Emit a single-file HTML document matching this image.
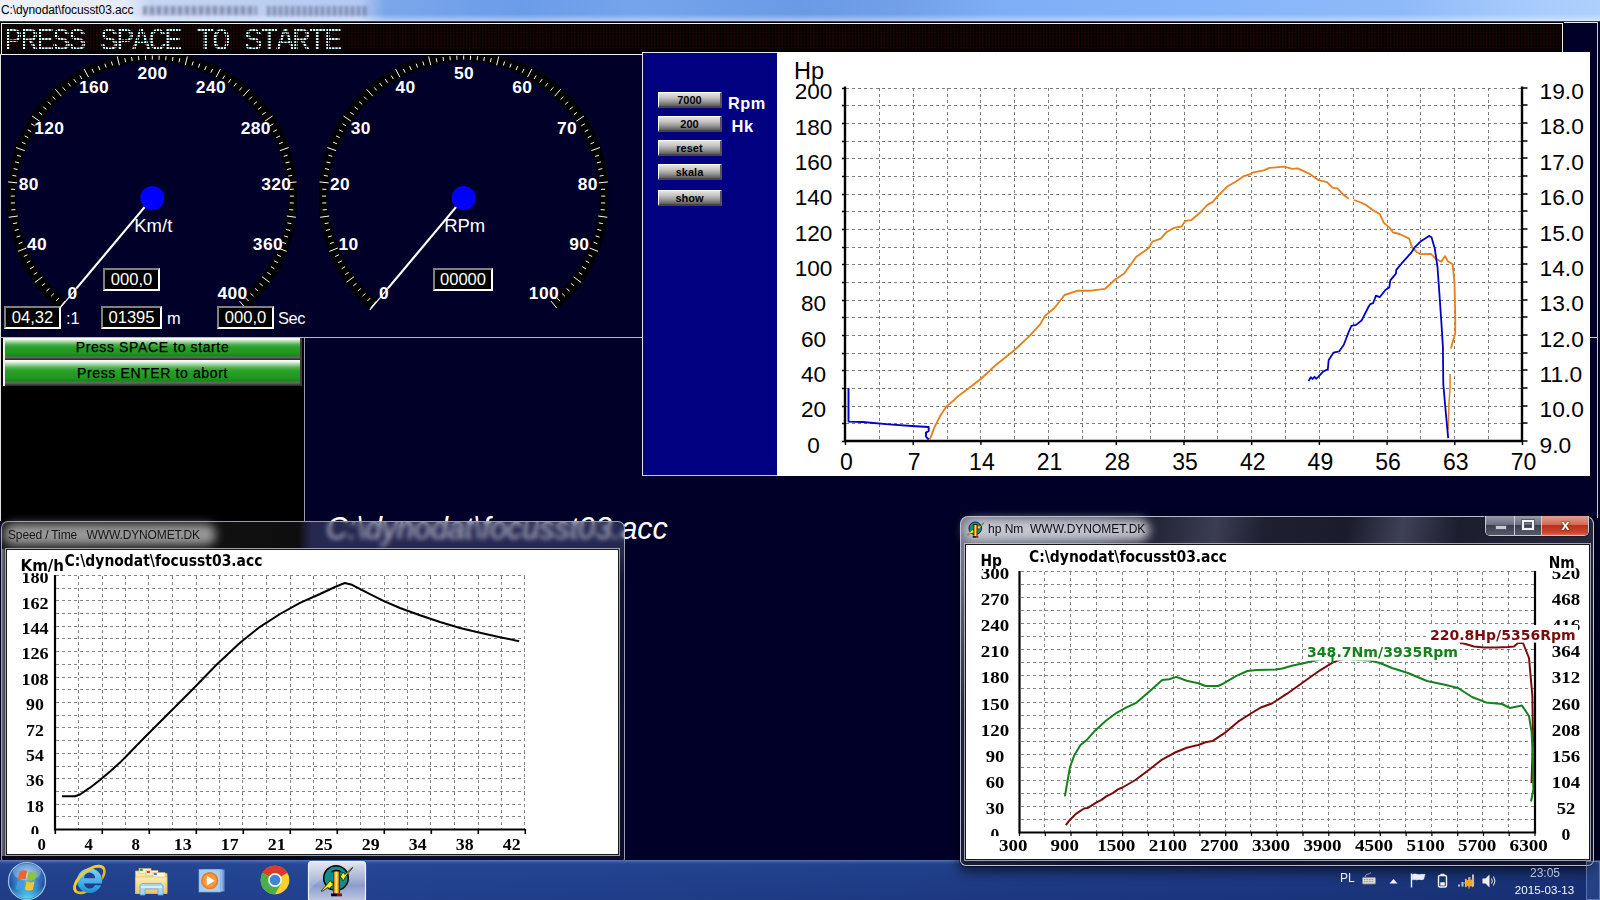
<!DOCTYPE html>
<html lang="en"><head><meta charset="utf-8"><title>C:\dynodat\focusst03.acc</title>
<style>
html,body{margin:0;padding:0;background:#000029;}
body{width:1600px;height:900px;overflow:hidden;position:relative;font-family:"Liberation Sans",sans-serif;}
.a{position:absolute;}
svg{position:absolute;left:0;top:0;overflow:visible;}
svg text{white-space:pre;}
.box{position:absolute;background:#000;color:#fff;font-size:16.6px;line-height:20px;text-align:center;border-style:solid;border-width:2px;border-color:#808080 #fff #fff #808080;box-sizing:border-box;height:23px;}
.lbl{position:absolute;color:#fff;font-size:16.4px;line-height:20px;}
.sbtn{position:absolute;left:658px;width:64px;height:16px;box-sizing:border-box;border-style:solid;border-width:1px 2px 2px 1px;border-color:#fff #555 #444 #fff;background:linear-gradient(#e4e4e4 0%,#c4c4c4 35%,#9a9a9a 65%,#5c5c5c 100%);font-weight:bold;font-size:11px;line-height:15px;text-align:center;color:#000;}
.gbtn{position:absolute;left:3px;width:299px;box-sizing:border-box;border-style:solid;border-width:0 2px 0 2px;border-color:#3c3c3c #3c3c3c #3c3c3c #eaf6ea;background:linear-gradient(#ffffff 0,#eef8ee 6%,#a9d9a9 16%,#4fb04f 30%,#2aa02a 42%,#1f961f 70%,#1b861b 80%,#5e6e5e 88%,#4a4a4a 93%,#222 100%);font-size:14px;letter-spacing:.62px;-webkit-text-stroke:.25px #000;text-align:center;color:#000;}
</style></head>
<body>
<div class="a" id="titlebar" style="left:0;top:0;width:1600px;height:21px;background:linear-gradient(90deg,#eef2fa 0,#e6ecf8 125px,#c6d5f1 150px,#b4c9f2 360px,#7ba6ea 385px,#6b9ce9 520px,#76a4ec 640px,#6a9ae6 800px,#729fe8 900px,#7eaef6 1000px,#86b4fa 1200px,#8ebaf9 1400px,#a6cafc 1520px,#aed0fd 1600px);"></div>
<div class="a" style="left:0;top:14px;width:1600px;height:7px;background:linear-gradient(rgba(255,255,255,0),rgba(255,255,255,.45));"></div>
<div class="a" style="left:143px;top:6px;width:114px;height:9px;background:repeating-linear-gradient(90deg,rgba(70,78,110,.7) 0,rgba(70,78,110,.7) 4px,rgba(70,78,110,.15) 4px,rgba(70,78,110,.15) 7px);filter:blur(1.8px);opacity:.7;"></div><div class="a" style="left:267px;top:6px;width:102px;height:10px;background:repeating-linear-gradient(90deg,rgba(70,78,110,.7) 0,rgba(70,78,110,.7) 3px,rgba(70,78,110,.15) 3px,rgba(70,78,110,.15) 6px);filter:blur(1.8px);opacity:.7;"></div>
<div class="a" id="ttext" style="left:1px;top:3px;font-size:12px;line-height:15px;color:#000;white-space:pre;letter-spacing:-0.1px;">C:\dynodat\focusst03.acc</div>
<div class="a" style="left:0;top:21px;width:1600px;height:1px;background:#3a3f55;"></div>
<div class="a" id="led" style="left:0;top:22px;width:1564px;height:33px;background:#000;"></div>
<div class="a" style="left:1px;top:23px;width:1562px;height:32px;box-sizing:border-box;border:1px solid #f0f0f0;background:#000;"></div>
<div class="a" style="left:3px;top:25px;width:1558px;height:25px;background-color:#050101;background-image:radial-gradient(circle at 1px 1px,#1f0604 0.8px,rgba(0,0,0,0) 1.25px);background-size:3.2px 3px;background-position:3.8px 3.5px;"></div>
<div class="a" id="ledmask" style="left:7px;top:29px;width:340px;height:21px;overflow:hidden;-webkit-mask-image:linear-gradient(90deg,#000 2px,transparent 2px),linear-gradient(180deg,#000 2px,transparent 2px);-webkit-mask-size:3.2px 100%,100% 3px;-webkit-mask-composite:source-in;mask-composite:intersect;"><div id="ledtext" style="position:absolute;left:-3px;top:-2px;height:30px;font-family:'Liberation Mono',monospace;font-size:31px;letter-spacing:-2.6px;line-height:30px;color:#d0ffff;white-space:pre;-webkit-text-stroke:0.15px #d0ffff;">PRESS SPACE TO STARTE</div></div>
<div class="a" style="left:1564px;top:22px;width:34px;height:1px;background:#f0f0f0;"></div>
<div class="a" style="left:1597px;top:22px;width:1px;height:496px;background:#c8c8dc;"></div>
<div class="a" style="left:1590px;top:337px;width:7px;height:1px;background:#d0d0e0;"></div>
<div class="a" style="left:0;top:54px;width:1px;height:467px;background:#e0e0e0;"></div>
<div class="a" style="left:0;top:337px;width:642px;height:1px;background:#b8b8c8;"></div>
<svg id="gauges" width="642" height="282" viewBox="0 55 642 282" style="left:0;top:55px;overflow:hidden">
<path d="M57.9 308.8L57.9 308.8L56.0 307.2L56.0 307.2L54.2 305.6L54.2 305.6L52.4 304.0L52.4 304.0L50.6 302.3L50.6 302.3L48.9 300.5L48.9 300.5L47.1 298.8L47.1 298.8L45.4 297.0L45.4 297.0L43.8 295.2L43.8 295.2L42.2 293.4L42.2 293.4L40.6 291.5L40.6 291.5L39.0 289.6L39.0 289.6L37.5 287.7L37.5 287.7L36.0 285.8L36.0 285.8L34.5 283.8L34.5 283.8L33.1 281.8L33.1 281.8L31.7 279.8L31.7 279.8L30.4 277.7L30.4 277.7L29.0 275.7L29.0 275.7L27.8 273.6L27.8 273.6L26.5 271.4L26.5 271.4L25.3 269.3L25.3 269.3L24.1 267.2L24.1 267.2L23.0 265.0L23.0 265.0L21.9 262.8L21.9 262.8L20.9 260.6L20.9 260.6L19.8 258.3L19.8 258.3L18.9 256.1L18.9 256.1L17.9 253.8L17.9 253.8L17.0 251.6L17.0 251.6L16.2 249.3L16.2 249.3L15.4 246.9L15.4 246.9L14.6 244.6L14.6 244.6L13.8 242.3L13.8 242.3L13.1 239.9L13.1 239.9L12.5 237.6L12.5 237.6L11.9 235.2L11.9 235.2L11.3 232.8L11.3 232.8L10.8 230.4L10.8 230.4L10.3 228.0L10.3 228.0L9.8 225.6L9.8 225.6L9.4 223.2L9.4 223.2L9.1 220.8L9.1 220.8L8.7 218.3L8.7 218.3L8.5 215.9L8.5 215.9L8.2 213.4L8.2 213.4L8.0 211.0L8.0 211.0L7.9 208.6L7.9 208.6L7.8 206.1L7.8 206.1L7.7 203.7L7.7 203.7L7.7 201.2L7.7 193.0L7.7 190.5L7.7 190.5L7.8 188.1L7.8 188.1L7.9 185.6L7.9 185.6L8.0 183.2L8.0 183.2L8.2 180.8L8.2 180.8L8.5 178.3L8.5 178.3L8.7 175.9L8.7 175.9L9.1 173.4L9.1 173.4L9.4 171.0L9.4 171.0L9.8 168.6L9.8 168.6L10.3 166.2L10.3 166.2L10.8 163.8L10.8 163.8L11.3 161.4L11.3 161.4L11.9 159.0L11.9 159.0L12.5 156.6L12.5 156.6L13.1 154.3L13.1 154.3L13.8 151.9L13.8 151.9L14.6 149.6L14.6 149.6L15.4 147.3L15.4 147.3L16.2 144.9L16.2 144.9L17.0 142.6L17.0 142.6L17.9 140.4L17.9 140.4L18.9 138.1L18.9 138.1L19.8 135.9L19.8 135.9L20.9 133.6L20.9 133.6L21.9 131.4L21.9 131.4L23.0 129.2L23.0 129.2L24.1 127.0L24.1 127.0L25.3 124.9L25.3 124.9L26.5 122.7L26.5 122.7L27.8 120.6L27.8 120.6L29.0 118.5L29.0 118.5L30.4 116.5L30.4 116.5L31.7 114.4L31.7 114.4L33.1 112.4L33.1 112.4L34.5 110.4L34.5 110.4L36.0 108.4L36.0 108.4L37.5 106.5L37.5 106.5L39.0 104.6L39.0 104.6L40.6 102.7L40.6 102.7L42.2 100.8L42.2 100.8L43.8 99.0L43.8 99.0L45.4 97.2L45.4 97.2L47.1 95.4L47.1 95.4L48.9 93.7L48.9 93.7L50.6 91.9L50.6 91.9L52.4 90.2L52.4 90.2L54.2 88.6L54.2 88.6L56.0 87.0L56.0 87.0L57.9 85.4L57.9 85.4L59.8 83.8L59.8 83.8L61.7 82.3L61.7 82.3L63.6 80.8L63.6 80.8L65.6 79.3L65.6 79.3L67.6 77.9L67.6 77.9L69.6 76.5L69.6 76.5L71.7 75.2L71.7 75.2L73.7 73.8L73.7 73.8L75.8 72.6L75.8 72.6L78.0 71.3L78.0 71.3L80.1 70.1L80.1 70.1L82.2 68.9L82.2 68.9L84.4 67.8L84.4 67.8L86.6 66.7L86.6 66.7L88.8 65.7L88.8 65.7L91.1 64.6L91.1 64.6L93.3 63.7L93.3 63.7L95.6 62.7L95.6 62.7L97.8 61.8L97.8 61.8L100.1 61.0L100.1 61.0L102.5 60.2L102.5 60.2L104.8 59.4L104.8 59.4L107.1 58.6L107.1 58.6L109.5 57.9L109.5 57.9L111.8 57.3L111.8 57.3L114.2 56.7L114.2 56.7L116.6 56.1L116.6 56.1L119.0 55.6L119.0 55.6L121.4 55.1L121.4 55.1L123.8 54.6L123.8 54.6L126.2 54.2L126.2 54.2L128.6 53.9L128.6 53.9L131.1 53.5L131.1 53.5L133.5 53.3L133.5 53.3L136.0 53.0L136.0 53.0L138.4 52.8L138.4 52.8L140.8 52.7L140.8 52.7L143.3 52.6L143.3 52.6L145.7 52.5L145.7 52.5L148.2 52.5L156.4 52.5L158.9 52.5L158.9 52.5L161.3 52.6L161.3 52.6L163.8 52.7L163.8 52.7L166.2 52.8L166.2 52.8L168.6 53.0L168.6 53.0L171.1 53.3L171.1 53.3L173.5 53.5L173.5 53.5L176.0 53.9L176.0 53.9L178.4 54.2L178.4 54.2L180.8 54.6L180.8 54.6L183.2 55.1L183.2 55.1L185.6 55.6L185.6 55.6L188.0 56.1L188.0 56.1L190.4 56.7L190.4 56.7L192.8 57.3L192.8 57.3L195.1 57.9L195.1 57.9L197.5 58.6L197.5 58.6L199.8 59.4L199.8 59.4L202.1 60.2L202.1 60.2L204.5 61.0L204.5 61.0L206.8 61.8L206.8 61.8L209.0 62.7L209.0 62.7L211.3 63.7L211.3 63.7L213.5 64.6L213.5 64.6L215.8 65.7L215.8 65.7L218.0 66.7L218.0 66.7L220.2 67.8L220.2 67.8L222.4 68.9L222.4 68.9L224.5 70.1L224.5 70.1L226.7 71.3L226.7 71.3L228.8 72.6L228.8 72.6L230.9 73.8L230.9 73.8L232.9 75.2L232.9 75.2L235.0 76.5L235.0 76.5L237.0 77.9L237.0 77.9L239.0 79.3L239.0 79.3L241.0 80.8L241.0 80.8L242.9 82.3L242.9 82.3L244.8 83.8L244.8 83.8L246.7 85.4L246.7 85.4L248.6 87.0L248.6 87.0L250.4 88.6L250.4 88.6L252.2 90.2L252.2 90.2L254.0 91.9L254.0 91.9L255.7 93.7L255.7 93.7L257.5 95.4L257.5 95.4L259.2 97.2L259.2 97.2L260.8 99.0L260.8 99.0L262.4 100.8L262.4 100.8L264.0 102.7L264.0 102.7L265.6 104.6L265.6 104.6L267.1 106.5L267.1 106.5L268.6 108.4L268.6 108.4L270.1 110.4L270.1 110.4L271.5 112.4L271.5 112.4L272.9 114.4L272.9 114.4L274.2 116.5L274.2 116.5L275.6 118.5L275.6 118.5L276.8 120.6L276.8 120.6L278.1 122.7L278.1 122.7L279.3 124.9L279.3 124.9L280.5 127.0L280.5 127.0L281.6 129.2L281.6 129.2L282.7 131.4L282.7 131.4L283.7 133.6L283.7 133.6L284.8 135.9L284.8 135.9L285.7 138.1L285.7 138.1L286.7 140.4L286.7 140.4L287.6 142.6L287.6 142.6L288.4 144.9L288.4 144.9L289.2 147.3L289.2 147.3L290.0 149.6L290.0 149.6L290.8 151.9L290.8 151.9L291.5 154.3L291.5 154.3L292.1 156.6L292.1 156.6L292.7 159.0L292.7 159.0L293.3 161.4L293.3 161.4L293.8 163.8L293.8 163.8L294.3 166.2L294.3 166.2L294.8 168.6L294.8 168.6L295.2 171.0L295.2 171.0L295.5 173.4L295.5 173.4L295.9 175.9L295.9 175.9L296.1 178.3L296.1 178.3L296.4 180.8L296.4 180.8L296.6 183.2L296.6 183.2L296.7 185.6L296.7 185.6L296.8 188.1L296.8 188.1L296.9 190.5L296.9 190.5L296.9 193.0L296.9 201.2L296.9 203.7L296.9 203.7L296.8 206.1L296.8 206.1L296.7 208.6L296.7 208.6L296.6 211.0L296.6 211.0L296.4 213.4L296.4 213.4L296.1 215.9L296.1 215.9L295.9 218.3L295.9 218.3L295.5 220.8L295.5 220.8L295.2 223.2L295.2 223.2L294.8 225.6L294.8 225.6L294.3 228.0L294.3 228.0L293.8 230.4L293.8 230.4L293.3 232.8L293.3 232.8L292.7 235.2L292.7 235.2L292.1 237.6L292.1 237.6L291.5 239.9L291.5 239.9L290.8 242.3L290.8 242.3L290.0 244.6L290.0 244.6L289.2 246.9L289.2 246.9L288.4 249.3L288.4 249.3L287.6 251.6L287.6 251.6L286.7 253.8L286.7 253.8L285.7 256.1L285.7 256.1L284.8 258.3L284.8 258.3L283.7 260.6L283.7 260.6L282.7 262.8L282.7 262.8L281.6 265.0L281.6 265.0L280.5 267.2L280.5 267.2L279.3 269.3L279.3 269.3L278.1 271.4L278.1 271.4L276.8 273.6L276.8 273.6L275.6 275.7L275.6 275.7L274.2 277.7L274.2 277.7L272.9 279.8L272.9 279.8L271.5 281.8L271.5 281.8L270.1 283.8L270.1 283.8L268.6 285.8L268.6 285.8L267.1 287.7L267.1 287.7L265.6 289.6L265.6 289.6L264.0 291.5L264.0 291.5L262.4 293.4L262.4 293.4L260.8 295.2L260.8 295.2L259.2 297.0L259.2 297.0L257.5 298.8L257.5 298.8L255.7 300.5L255.7 300.5L254.0 302.3L254.0 302.3L252.2 304.0L252.2 304.0L250.4 305.6L250.4 305.6L248.6 307.2L248.6 307.2L246.7 308.8L246.7 308.8L238.5 300.6L238.5 300.6L240.4 299.0L240.4 299.0L242.2 297.4L242.2 297.4L244.0 295.8L244.0 295.8L245.8 294.1L245.8 294.1L247.5 292.3L247.5 292.3L249.3 290.6L249.3 290.6L251.0 288.8L251.0 288.8L252.6 287.0L252.6 287.0L254.2 285.2L254.2 285.2L255.8 283.3L255.8 283.3L257.4 281.4L257.4 281.4L258.9 279.5L258.9 279.5L260.4 277.6L260.4 277.6L261.9 275.6L261.9 275.6L263.3 273.6L263.3 273.6L264.7 271.6L264.7 271.6L266.0 269.5L266.0 269.5L267.4 267.5L267.4 267.5L268.6 265.4L268.6 265.4L269.9 263.2L269.9 263.2L271.1 261.1L271.1 261.1L272.3 259.0L272.3 259.0L273.4 256.8L273.4 256.8L274.5 254.6L274.5 254.6L275.5 252.4L275.5 252.4L276.6 250.1L276.6 250.1L277.5 247.9L277.5 247.9L278.5 245.6L278.5 245.6L279.4 243.4L279.4 243.4L280.2 241.1L280.2 241.1L281.0 238.7L281.0 238.7L281.8 236.4L281.8 236.4L282.6 234.1L282.6 234.1L283.3 231.7L283.3 231.7L283.9 229.4L283.9 229.4L284.5 227.0L284.5 227.0L285.1 224.6L285.1 224.6L285.6 222.2L285.6 222.2L286.1 219.8L286.1 219.8L286.6 217.4L286.6 217.4L287.0 215.0L287.0 215.0L287.3 212.6L287.3 212.6L287.7 210.1L287.7 210.1L287.9 207.7L287.9 207.7L288.2 205.2L288.2 205.2L288.4 202.8L288.4 202.8L288.5 200.4L288.5 200.4L288.6 197.9L288.6 197.9L288.7 195.5L288.7 195.5L288.7 193.0L288.7 201.2L288.7 198.7L288.7 198.7L288.6 196.3L288.6 196.3L288.5 193.8L288.5 193.8L288.4 191.4L288.4 191.4L288.2 189.0L288.2 189.0L287.9 186.5L287.9 186.5L287.7 184.1L287.7 184.1L287.3 181.6L287.3 181.6L287.0 179.2L287.0 179.2L286.6 176.8L286.6 176.8L286.1 174.4L286.1 174.4L285.6 172.0L285.6 172.0L285.1 169.6L285.1 169.6L284.5 167.2L284.5 167.2L283.9 164.8L283.9 164.8L283.3 162.5L283.3 162.5L282.6 160.1L282.6 160.1L281.8 157.8L281.8 157.8L281.0 155.5L281.0 155.5L280.2 153.1L280.2 153.1L279.4 150.8L279.4 150.8L278.5 148.6L278.5 148.6L277.5 146.3L277.5 146.3L276.6 144.1L276.6 144.1L275.5 141.8L275.5 141.8L274.5 139.6L274.5 139.6L273.4 137.4L273.4 137.4L272.3 135.2L272.3 135.2L271.1 133.1L271.1 133.1L269.9 130.9L269.9 130.9L268.6 128.8L268.6 128.8L267.4 126.7L267.4 126.7L266.0 124.7L266.0 124.7L264.7 122.6L264.7 122.6L263.3 120.6L263.3 120.6L261.9 118.6L261.9 118.6L260.4 116.6L260.4 116.6L258.9 114.7L258.9 114.7L257.4 112.8L257.4 112.8L255.8 110.9L255.8 110.9L254.2 109.0L254.2 109.0L252.6 107.2L252.6 107.2L251.0 105.4L251.0 105.4L249.3 103.6L249.3 103.6L247.5 101.9L247.5 101.9L245.8 100.1L245.8 100.1L244.0 98.4L244.0 98.4L242.2 96.8L242.2 96.8L240.4 95.2L240.4 95.2L238.5 93.6L238.5 93.6L236.6 92.0L236.6 92.0L234.7 90.5L234.7 90.5L232.8 89.0L232.8 89.0L230.8 87.5L230.8 87.5L228.8 86.1L228.8 86.1L226.8 84.7L226.8 84.7L224.7 83.4L224.7 83.4L222.7 82.0L222.7 82.0L220.6 80.8L220.6 80.8L218.5 79.5L218.5 79.5L216.3 78.3L216.3 78.3L214.2 77.1L214.2 77.1L212.0 76.0L212.0 76.0L209.8 74.9L209.8 74.9L207.6 73.9L207.6 73.9L205.3 72.8L205.3 72.8L203.1 71.9L203.1 71.9L200.8 70.9L200.8 70.9L198.6 70.0L198.6 70.0L196.3 69.2L196.3 69.2L193.9 68.4L193.9 68.4L191.6 67.6L191.6 67.6L189.3 66.8L189.3 66.8L186.9 66.1L186.9 66.1L184.6 65.5L184.6 65.5L182.2 64.9L182.2 64.9L179.8 64.3L179.8 64.3L177.4 63.8L177.4 63.8L175.0 63.3L175.0 63.3L172.6 62.8L172.6 62.8L170.2 62.4L170.2 62.4L167.8 62.1L167.8 62.1L165.3 61.7L165.3 61.7L162.9 61.5L162.9 61.5L160.4 61.2L160.4 61.2L158.0 61.0L158.0 61.0L155.6 60.9L155.6 60.9L153.1 60.8L153.1 60.8L150.7 60.7L150.7 60.7L148.2 60.7L156.4 60.7L153.9 60.7L153.9 60.7L151.5 60.8L151.5 60.8L149.0 60.9L149.0 60.9L146.6 61.0L146.6 61.0L144.2 61.2L144.2 61.2L141.7 61.5L141.7 61.5L139.3 61.7L139.3 61.7L136.8 62.1L136.8 62.1L134.4 62.4L134.4 62.4L132.0 62.8L132.0 62.8L129.6 63.3L129.6 63.3L127.2 63.8L127.2 63.8L124.8 64.3L124.8 64.3L122.4 64.9L122.4 64.9L120.0 65.5L120.0 65.5L117.7 66.1L117.7 66.1L115.3 66.8L115.3 66.8L113.0 67.6L113.0 67.6L110.7 68.4L110.7 68.4L108.3 69.2L108.3 69.2L106.0 70.0L106.0 70.0L103.8 70.9L103.8 70.9L101.5 71.9L101.5 71.9L99.3 72.8L99.3 72.8L97.0 73.9L97.0 73.9L94.8 74.9L94.8 74.9L92.6 76.0L92.6 76.0L90.4 77.1L90.4 77.1L88.3 78.3L88.3 78.3L86.2 79.5L86.2 79.5L84.0 80.8L84.0 80.8L81.9 82.0L81.9 82.0L79.9 83.4L79.9 83.4L77.8 84.7L77.8 84.7L75.8 86.1L75.8 86.1L73.8 87.5L73.8 87.5L71.8 89.0L71.8 89.0L69.9 90.5L69.9 90.5L68.0 92.0L68.0 92.0L66.1 93.6L66.1 93.6L64.2 95.2L64.2 95.2L62.4 96.8L62.4 96.8L60.6 98.4L60.6 98.4L58.8 100.1L58.8 100.1L57.1 101.9L57.1 101.9L55.3 103.6L55.3 103.6L53.6 105.4L53.6 105.4L52.0 107.2L52.0 107.2L50.4 109.0L50.4 109.0L48.8 110.9L48.8 110.9L47.2 112.8L47.2 112.8L45.7 114.7L45.7 114.7L44.2 116.6L44.2 116.6L42.7 118.6L42.7 118.6L41.3 120.6L41.3 120.6L39.9 122.6L39.9 122.6L38.6 124.7L38.6 124.7L37.2 126.7L37.2 126.7L36.0 128.8L36.0 128.8L34.7 130.9L34.7 130.9L33.5 133.1L33.5 133.1L32.3 135.2L32.3 135.2L31.2 137.4L31.2 137.4L30.1 139.6L30.1 139.6L29.1 141.8L29.1 141.8L28.0 144.1L28.0 144.1L27.1 146.3L27.1 146.3L26.1 148.6L26.1 148.6L25.2 150.8L25.2 150.8L24.4 153.1L24.4 153.1L23.6 155.5L23.6 155.5L22.8 157.8L22.8 157.8L22.0 160.1L22.0 160.1L21.3 162.5L21.3 162.5L20.7 164.8L20.7 164.8L20.1 167.2L20.1 167.2L19.5 169.6L19.5 169.6L19.0 172.0L19.0 172.0L18.5 174.4L18.5 174.4L18.0 176.8L18.0 176.8L17.6 179.2L17.6 179.2L17.3 181.6L17.3 181.6L16.9 184.1L16.9 184.1L16.7 186.5L16.7 186.5L16.4 189.0L16.4 189.0L16.2 191.4L16.2 191.4L16.1 193.8L16.1 193.8L16.0 196.3L16.0 196.3L15.9 198.7L15.9 198.7L15.9 201.2L15.9 193.0L15.9 195.5L15.9 195.5L16.0 197.9L16.0 197.9L16.1 200.4L16.1 200.4L16.2 202.8L16.2 202.8L16.4 205.2L16.4 205.2L16.7 207.7L16.7 207.7L16.9 210.1L16.9 210.1L17.3 212.6L17.3 212.6L17.6 215.0L17.6 215.0L18.0 217.4L18.0 217.4L18.5 219.8L18.5 219.8L19.0 222.2L19.0 222.2L19.5 224.6L19.5 224.6L20.1 227.0L20.1 227.0L20.7 229.4L20.7 229.4L21.3 231.7L21.3 231.7L22.0 234.1L22.0 234.1L22.8 236.4L22.8 236.4L23.6 238.7L23.6 238.7L24.4 241.1L24.4 241.1L25.2 243.4L25.2 243.4L26.1 245.6L26.1 245.6L27.1 247.9L27.1 247.9L28.0 250.1L28.0 250.1L29.1 252.4L29.1 252.4L30.1 254.6L30.1 254.6L31.2 256.8L31.2 256.8L32.3 259.0L32.3 259.0L33.5 261.1L33.5 261.1L34.7 263.2L34.7 263.2L36.0 265.4L36.0 265.4L37.2 267.5L37.2 267.5L38.6 269.5L38.6 269.5L39.9 271.6L39.9 271.6L41.3 273.6L41.3 273.6L42.7 275.6L42.7 275.6L44.2 277.6L44.2 277.6L45.7 279.5L45.7 279.5L47.2 281.4L47.2 281.4L48.8 283.3L48.8 283.3L50.4 285.2L50.4 285.2L52.0 287.0L52.0 287.0L53.6 288.8L53.6 288.8L55.3 290.6L55.3 290.6L57.1 292.3L57.1 292.3L58.8 294.1L58.8 294.1L60.6 295.8L60.6 295.8L62.4 297.4L62.4 297.4L64.2 299.0L64.2 299.0L66.1 300.6L66.1 300.6Z" fill="#000"/><path d="M65.0 301.1L59.1 308.2M58.9 298.0L56.1 301.0M54.1 293.3L51.1 296.2M49.5 288.4L46.4 291.1M45.1 283.3L41.9 285.8M42.4 276.9L35.0 282.3M37.2 272.4L33.8 274.6M33.7 266.7L30.2 268.8M30.4 260.8L26.8 262.7M27.5 254.8L23.8 256.5M26.4 248.0L17.9 251.4M22.4 242.3L18.6 243.7M20.4 235.9L16.5 237.1M18.7 229.4L14.7 230.4M17.2 222.9L13.2 223.6M17.8 216.0L8.7 217.3M15.4 209.6L11.3 209.9M14.9 202.9L10.8 203.0M14.8 196.1L10.7 196.1M15.0 189.4L10.9 189.2M17.2 182.9L8.1 181.9M16.4 176.1L12.4 175.4M17.6 169.5L13.6 168.6M19.1 162.9L15.1 161.9M20.9 156.4L17.0 155.2M24.7 150.7L16.0 147.5M25.5 143.8L21.8 142.2M28.3 137.7L24.6 135.9M31.3 131.7L27.7 129.8M34.7 125.9L31.2 123.7M39.7 121.2L32.1 116.0M42.2 114.7L38.9 112.3M46.4 109.5L43.2 106.8M50.8 104.4L47.7 101.6M55.4 99.5L52.5 96.6M61.4 96.2L55.3 89.3M65.4 90.5L62.8 87.4M70.7 86.4L68.3 83.1M76.2 82.6L73.9 79.2M81.9 79.0L79.8 75.5M88.5 77.2L84.2 69.1M93.8 72.7L92.0 69.0M99.9 70.0L98.3 66.2M106.2 67.6L104.8 63.7M112.6 65.5L111.4 61.5M119.4 65.3L117.2 56.4M125.6 62.2L124.8 58.2M132.2 61.1L131.6 57.0M138.9 60.3L138.5 56.2M145.6 59.8L145.4 55.7M152.3 59.6L152.3 55.5M159.0 59.8L159.2 55.7M165.7 60.3L166.1 56.2M172.4 61.1L173.0 57.0M179.0 62.2L179.8 58.2M185.2 65.3L187.4 56.4M192.0 65.5L193.2 61.5M198.4 67.6L199.8 63.7M204.7 70.0L206.3 66.2M210.8 72.7L212.6 69.0M216.1 77.2L220.4 69.1M222.7 79.0L224.8 75.5M228.4 82.6L230.7 79.2M233.9 86.4L236.3 83.1M239.2 90.5L241.8 87.4M243.2 96.2L249.3 89.3M249.2 99.5L252.1 96.6M253.8 104.4L256.9 101.6M258.2 109.5L261.4 106.8M262.4 114.7L265.7 112.3M264.9 121.2L272.5 116.0M269.9 125.9L273.4 123.7M273.3 131.7L276.9 129.8M276.3 137.7L280.0 135.9M279.1 143.8L282.8 142.2M279.9 150.7L288.6 147.5M283.7 156.4L287.6 155.2M285.5 162.9L289.5 161.9M287.0 169.5L291.0 168.6M288.2 176.1L292.2 175.4M287.4 182.9L296.5 181.9M289.6 189.4L293.7 189.2M289.8 196.1L293.9 196.1M289.7 202.9L293.8 203.0M289.2 209.6L293.3 209.9M286.8 216.0L295.9 217.3M287.4 222.9L291.4 223.6M285.9 229.4L289.9 230.4M284.2 235.9L288.1 237.1M282.2 242.3L286.0 243.7M278.2 248.0L286.7 251.4M277.1 254.8L280.8 256.5M274.2 260.8L277.8 262.7M270.9 266.7L274.4 268.8M267.4 272.4L270.8 274.6M262.2 276.9L269.6 282.3M259.5 283.3L262.7 285.8M255.1 288.4L258.2 291.1M250.5 293.3L253.5 296.2M245.7 298.0L248.5 301.0M239.6 301.1L245.5 308.2" stroke="#fff" stroke-width="1" fill="none"/><text x="72.5" y="298.7" text-anchor="middle" font-size="17.4" font-weight="bold" letter-spacing=".35" fill="#fff">0</text><text x="37.1" y="249.9" text-anchor="middle" font-size="17.4" font-weight="bold" letter-spacing=".35" fill="#fff">40</text><text x="28.7" y="190.3" text-anchor="middle" font-size="17.4" font-weight="bold" letter-spacing=".35" fill="#fff">80</text><text x="49.3" y="133.7" text-anchor="middle" font-size="17.4" font-weight="bold" letter-spacing=".35" fill="#fff">120</text><text x="94.1" y="93.4" text-anchor="middle" font-size="17.4" font-weight="bold" letter-spacing=".35" fill="#fff">160</text><text x="152.5" y="78.8" text-anchor="middle" font-size="17.4" font-weight="bold" letter-spacing=".35" fill="#fff">200</text><text x="210.9" y="93.4" text-anchor="middle" font-size="17.4" font-weight="bold" letter-spacing=".35" fill="#fff">240</text><text x="255.7" y="133.7" text-anchor="middle" font-size="17.4" font-weight="bold" letter-spacing=".35" fill="#fff">280</text><text x="276.3" y="190.3" text-anchor="middle" font-size="17.4" font-weight="bold" letter-spacing=".35" fill="#fff">320</text><text x="267.9" y="249.9" text-anchor="middle" font-size="17.4" font-weight="bold" letter-spacing=".35" fill="#fff">360</text><text x="232.5" y="298.7" text-anchor="middle" font-size="17.4" font-weight="bold" letter-spacing=".35" fill="#fff">400</text><path d="M145.2 206.4L76.5 288.4" stroke="#fff" stroke-width="2.2"/><path d="M76.5 288.4L58.5 309.8" stroke="#fff" stroke-width="1.2"/><circle cx="152.3" cy="198.0" r="12" fill="#0000fe"/><text x="153.3" y="232.0" text-anchor="middle" font-size="18.5" fill="#fff">Km/t</text>
<path d="M369.3 308.8L369.3 308.8L367.4 307.2L367.4 307.2L365.6 305.6L365.6 305.6L363.8 304.0L363.8 304.0L362.0 302.3L362.0 302.3L360.3 300.5L360.3 300.5L358.5 298.8L358.5 298.8L356.8 297.0L356.8 297.0L355.2 295.2L355.2 295.2L353.6 293.4L353.6 293.4L352.0 291.5L352.0 291.5L350.4 289.6L350.4 289.6L348.9 287.7L348.9 287.7L347.4 285.8L347.4 285.8L345.9 283.8L345.9 283.8L344.5 281.8L344.5 281.8L343.1 279.8L343.1 279.8L341.8 277.7L341.8 277.7L340.4 275.7L340.4 275.7L339.2 273.6L339.2 273.6L337.9 271.4L337.9 271.4L336.7 269.3L336.7 269.3L335.5 267.2L335.5 267.2L334.4 265.0L334.4 265.0L333.3 262.8L333.3 262.8L332.3 260.6L332.3 260.6L331.2 258.3L331.2 258.3L330.3 256.1L330.3 256.1L329.3 253.8L329.3 253.8L328.4 251.6L328.4 251.6L327.6 249.3L327.6 249.3L326.8 246.9L326.8 246.9L326.0 244.6L326.0 244.6L325.2 242.3L325.2 242.3L324.5 239.9L324.5 239.9L323.9 237.6L323.9 237.6L323.3 235.2L323.3 235.2L322.7 232.8L322.7 232.8L322.2 230.4L322.2 230.4L321.7 228.0L321.7 228.0L321.2 225.6L321.2 225.6L320.8 223.2L320.8 223.2L320.5 220.8L320.5 220.8L320.1 218.3L320.1 218.3L319.9 215.9L319.9 215.9L319.6 213.4L319.6 213.4L319.4 211.0L319.4 211.0L319.3 208.6L319.3 208.6L319.2 206.1L319.2 206.1L319.1 203.7L319.1 203.7L319.1 201.2L319.1 193.0L319.1 190.5L319.1 190.5L319.2 188.1L319.2 188.1L319.3 185.6L319.3 185.6L319.4 183.2L319.4 183.2L319.6 180.8L319.6 180.8L319.9 178.3L319.9 178.3L320.1 175.9L320.1 175.9L320.5 173.4L320.5 173.4L320.8 171.0L320.8 171.0L321.2 168.6L321.2 168.6L321.7 166.2L321.7 166.2L322.2 163.8L322.2 163.8L322.7 161.4L322.7 161.4L323.3 159.0L323.3 159.0L323.9 156.6L323.9 156.6L324.5 154.3L324.5 154.3L325.2 151.9L325.2 151.9L326.0 149.6L326.0 149.6L326.8 147.3L326.8 147.3L327.6 144.9L327.6 144.9L328.4 142.6L328.4 142.6L329.3 140.4L329.3 140.4L330.3 138.1L330.3 138.1L331.2 135.9L331.2 135.9L332.3 133.6L332.3 133.6L333.3 131.4L333.3 131.4L334.4 129.2L334.4 129.2L335.5 127.0L335.5 127.0L336.7 124.9L336.7 124.9L337.9 122.7L337.9 122.7L339.2 120.6L339.2 120.6L340.4 118.5L340.4 118.5L341.8 116.5L341.8 116.5L343.1 114.4L343.1 114.4L344.5 112.4L344.5 112.4L345.9 110.4L345.9 110.4L347.4 108.4L347.4 108.4L348.9 106.5L348.9 106.5L350.4 104.6L350.4 104.6L352.0 102.7L352.0 102.7L353.6 100.8L353.6 100.8L355.2 99.0L355.2 99.0L356.8 97.2L356.8 97.2L358.5 95.4L358.5 95.4L360.3 93.7L360.3 93.7L362.0 91.9L362.0 91.9L363.8 90.2L363.8 90.2L365.6 88.6L365.6 88.6L367.4 87.0L367.4 87.0L369.3 85.4L369.3 85.4L371.2 83.8L371.2 83.8L373.1 82.3L373.1 82.3L375.0 80.8L375.0 80.8L377.0 79.3L377.0 79.3L379.0 77.9L379.0 77.9L381.0 76.5L381.0 76.5L383.1 75.2L383.1 75.2L385.1 73.8L385.1 73.8L387.2 72.6L387.2 72.6L389.3 71.3L389.3 71.3L391.5 70.1L391.5 70.1L393.6 68.9L393.6 68.9L395.8 67.8L395.8 67.8L398.0 66.7L398.0 66.7L400.2 65.7L400.2 65.7L402.5 64.6L402.5 64.6L404.7 63.7L404.7 63.7L407.0 62.7L407.0 62.7L409.2 61.8L409.2 61.8L411.5 61.0L411.5 61.0L413.9 60.2L413.9 60.2L416.2 59.4L416.2 59.4L418.5 58.6L418.5 58.6L420.9 57.9L420.9 57.9L423.2 57.3L423.2 57.3L425.6 56.7L425.6 56.7L428.0 56.1L428.0 56.1L430.4 55.6L430.4 55.6L432.8 55.1L432.8 55.1L435.2 54.6L435.2 54.6L437.6 54.2L437.6 54.2L440.0 53.9L440.0 53.9L442.5 53.5L442.5 53.5L444.9 53.3L444.9 53.3L447.4 53.0L447.4 53.0L449.8 52.8L449.8 52.8L452.2 52.7L452.2 52.7L454.7 52.6L454.7 52.6L457.1 52.5L457.1 52.5L459.6 52.5L467.8 52.5L470.3 52.5L470.3 52.5L472.7 52.6L472.7 52.6L475.2 52.7L475.2 52.7L477.6 52.8L477.6 52.8L480.0 53.0L480.0 53.0L482.5 53.3L482.5 53.3L484.9 53.5L484.9 53.5L487.4 53.9L487.4 53.9L489.8 54.2L489.8 54.2L492.2 54.6L492.2 54.6L494.6 55.1L494.6 55.1L497.0 55.6L497.0 55.6L499.4 56.1L499.4 56.1L501.8 56.7L501.8 56.7L504.2 57.3L504.2 57.3L506.5 57.9L506.5 57.9L508.9 58.6L508.9 58.6L511.2 59.4L511.2 59.4L513.5 60.2L513.5 60.2L515.9 61.0L515.9 61.0L518.2 61.8L518.2 61.8L520.4 62.7L520.4 62.7L522.7 63.7L522.7 63.7L524.9 64.6L524.9 64.6L527.2 65.7L527.2 65.7L529.4 66.7L529.4 66.7L531.6 67.8L531.6 67.8L533.8 68.9L533.8 68.9L535.9 70.1L535.9 70.1L538.0 71.3L538.0 71.3L540.2 72.6L540.2 72.6L542.3 73.8L542.3 73.8L544.3 75.2L544.3 75.2L546.4 76.5L546.4 76.5L548.4 77.9L548.4 77.9L550.4 79.3L550.4 79.3L552.4 80.8L552.4 80.8L554.3 82.3L554.3 82.3L556.2 83.8L556.2 83.8L558.1 85.4L558.1 85.4L560.0 87.0L560.0 87.0L561.8 88.6L561.8 88.6L563.6 90.2L563.6 90.2L565.4 91.9L565.4 91.9L567.1 93.7L567.1 93.7L568.9 95.4L568.9 95.4L570.6 97.2L570.6 97.2L572.2 99.0L572.2 99.0L573.8 100.8L573.8 100.8L575.4 102.7L575.4 102.7L577.0 104.6L577.0 104.6L578.5 106.5L578.5 106.5L580.0 108.4L580.0 108.4L581.5 110.4L581.5 110.4L582.9 112.4L582.9 112.4L584.3 114.4L584.3 114.4L585.6 116.5L585.6 116.5L587.0 118.5L587.0 118.5L588.2 120.6L588.2 120.6L589.5 122.7L589.5 122.7L590.7 124.9L590.7 124.9L591.9 127.0L591.9 127.0L593.0 129.2L593.0 129.2L594.1 131.4L594.1 131.4L595.1 133.6L595.1 133.6L596.2 135.9L596.2 135.9L597.1 138.1L597.1 138.1L598.1 140.4L598.1 140.4L599.0 142.6L599.0 142.6L599.8 144.9L599.8 144.9L600.6 147.3L600.6 147.3L601.4 149.6L601.4 149.6L602.2 151.9L602.2 151.9L602.9 154.3L602.9 154.3L603.5 156.6L603.5 156.6L604.1 159.0L604.1 159.0L604.7 161.4L604.7 161.4L605.2 163.8L605.2 163.8L605.7 166.2L605.7 166.2L606.2 168.6L606.2 168.6L606.6 171.0L606.6 171.0L606.9 173.4L606.9 173.4L607.3 175.9L607.3 175.9L607.5 178.3L607.5 178.3L607.8 180.8L607.8 180.8L608.0 183.2L608.0 183.2L608.1 185.6L608.1 185.6L608.2 188.1L608.2 188.1L608.3 190.5L608.3 190.5L608.3 193.0L608.3 201.2L608.3 203.7L608.3 203.7L608.2 206.1L608.2 206.1L608.1 208.6L608.1 208.6L608.0 211.0L608.0 211.0L607.8 213.4L607.8 213.4L607.5 215.9L607.5 215.9L607.3 218.3L607.3 218.3L606.9 220.8L606.9 220.8L606.6 223.2L606.6 223.2L606.2 225.6L606.2 225.6L605.7 228.0L605.7 228.0L605.2 230.4L605.2 230.4L604.7 232.8L604.7 232.8L604.1 235.2L604.1 235.2L603.5 237.6L603.5 237.6L602.9 239.9L602.9 239.9L602.2 242.3L602.2 242.3L601.4 244.6L601.4 244.6L600.6 246.9L600.6 246.9L599.8 249.3L599.8 249.3L599.0 251.6L599.0 251.6L598.1 253.8L598.1 253.8L597.1 256.1L597.1 256.1L596.2 258.3L596.2 258.3L595.1 260.6L595.1 260.6L594.1 262.8L594.1 262.8L593.0 265.0L593.0 265.0L591.9 267.2L591.9 267.2L590.7 269.3L590.7 269.3L589.5 271.4L589.5 271.4L588.2 273.6L588.2 273.6L587.0 275.7L587.0 275.7L585.6 277.7L585.6 277.7L584.3 279.8L584.3 279.8L582.9 281.8L582.9 281.8L581.5 283.8L581.5 283.8L580.0 285.8L580.0 285.8L578.5 287.7L578.5 287.7L577.0 289.6L577.0 289.6L575.4 291.5L575.4 291.5L573.8 293.4L573.8 293.4L572.2 295.2L572.2 295.2L570.6 297.0L570.6 297.0L568.9 298.8L568.9 298.8L567.1 300.5L567.1 300.5L565.4 302.3L565.4 302.3L563.6 304.0L563.6 304.0L561.8 305.6L561.8 305.6L560.0 307.2L560.0 307.2L558.1 308.8L558.1 308.8L549.9 300.6L549.9 300.6L551.8 299.0L551.8 299.0L553.6 297.4L553.6 297.4L555.4 295.8L555.4 295.8L557.2 294.1L557.2 294.1L558.9 292.3L558.9 292.3L560.7 290.6L560.7 290.6L562.4 288.8L562.4 288.8L564.0 287.0L564.0 287.0L565.6 285.2L565.6 285.2L567.2 283.3L567.2 283.3L568.8 281.4L568.8 281.4L570.3 279.5L570.3 279.5L571.8 277.6L571.8 277.6L573.3 275.6L573.3 275.6L574.7 273.6L574.7 273.6L576.1 271.6L576.1 271.6L577.4 269.5L577.4 269.5L578.8 267.5L578.8 267.5L580.0 265.4L580.0 265.4L581.3 263.2L581.3 263.2L582.5 261.1L582.5 261.1L583.7 259.0L583.7 259.0L584.8 256.8L584.8 256.8L585.9 254.6L585.9 254.6L586.9 252.4L586.9 252.4L588.0 250.1L588.0 250.1L588.9 247.9L588.9 247.9L589.9 245.6L589.9 245.6L590.8 243.4L590.8 243.4L591.6 241.1L591.6 241.1L592.4 238.7L592.4 238.7L593.2 236.4L593.2 236.4L594.0 234.1L594.0 234.1L594.7 231.7L594.7 231.7L595.3 229.4L595.3 229.4L595.9 227.0L595.9 227.0L596.5 224.6L596.5 224.6L597.0 222.2L597.0 222.2L597.5 219.8L597.5 219.8L598.0 217.4L598.0 217.4L598.4 215.0L598.4 215.0L598.7 212.6L598.7 212.6L599.1 210.1L599.1 210.1L599.3 207.7L599.3 207.7L599.6 205.2L599.6 205.2L599.8 202.8L599.8 202.8L599.9 200.4L599.9 200.4L600.0 197.9L600.0 197.9L600.1 195.5L600.1 195.5L600.1 193.0L600.1 201.2L600.1 198.7L600.1 198.7L600.0 196.3L600.0 196.3L599.9 193.8L599.9 193.8L599.8 191.4L599.8 191.4L599.6 189.0L599.6 189.0L599.3 186.5L599.3 186.5L599.1 184.1L599.1 184.1L598.7 181.6L598.7 181.6L598.4 179.2L598.4 179.2L598.0 176.8L598.0 176.8L597.5 174.4L597.5 174.4L597.0 172.0L597.0 172.0L596.5 169.6L596.5 169.6L595.9 167.2L595.9 167.2L595.3 164.8L595.3 164.8L594.7 162.5L594.7 162.5L594.0 160.1L594.0 160.1L593.2 157.8L593.2 157.8L592.4 155.5L592.4 155.5L591.6 153.1L591.6 153.1L590.8 150.8L590.8 150.8L589.9 148.6L589.9 148.6L588.9 146.3L588.9 146.3L588.0 144.1L588.0 144.1L586.9 141.8L586.9 141.8L585.9 139.6L585.9 139.6L584.8 137.4L584.8 137.4L583.7 135.2L583.7 135.2L582.5 133.1L582.5 133.1L581.3 130.9L581.3 130.9L580.0 128.8L580.0 128.8L578.8 126.7L578.8 126.7L577.4 124.7L577.4 124.7L576.1 122.6L576.1 122.6L574.7 120.6L574.7 120.6L573.3 118.6L573.3 118.6L571.8 116.6L571.8 116.6L570.3 114.7L570.3 114.7L568.8 112.8L568.8 112.8L567.2 110.9L567.2 110.9L565.6 109.0L565.6 109.0L564.0 107.2L564.0 107.2L562.4 105.4L562.4 105.4L560.7 103.6L560.7 103.6L558.9 101.9L558.9 101.9L557.2 100.1L557.2 100.1L555.4 98.4L555.4 98.4L553.6 96.8L553.6 96.8L551.8 95.2L551.8 95.2L549.9 93.6L549.9 93.6L548.0 92.0L548.0 92.0L546.1 90.5L546.1 90.5L544.2 89.0L544.2 89.0L542.2 87.5L542.2 87.5L540.2 86.1L540.2 86.1L538.2 84.7L538.2 84.7L536.1 83.4L536.1 83.4L534.1 82.0L534.1 82.0L532.0 80.8L532.0 80.8L529.8 79.5L529.8 79.5L527.7 78.3L527.7 78.3L525.6 77.1L525.6 77.1L523.4 76.0L523.4 76.0L521.2 74.9L521.2 74.9L519.0 73.9L519.0 73.9L516.7 72.8L516.7 72.8L514.5 71.9L514.5 71.9L512.2 70.9L512.2 70.9L510.0 70.0L510.0 70.0L507.7 69.2L507.7 69.2L505.3 68.4L505.3 68.4L503.0 67.6L503.0 67.6L500.7 66.8L500.7 66.8L498.3 66.1L498.3 66.1L496.0 65.5L496.0 65.5L493.6 64.9L493.6 64.9L491.2 64.3L491.2 64.3L488.8 63.8L488.8 63.8L486.4 63.3L486.4 63.3L484.0 62.8L484.0 62.8L481.6 62.4L481.6 62.4L479.2 62.1L479.2 62.1L476.7 61.7L476.7 61.7L474.3 61.5L474.3 61.5L471.8 61.2L471.8 61.2L469.4 61.0L469.4 61.0L467.0 60.9L467.0 60.9L464.5 60.8L464.5 60.8L462.1 60.7L462.1 60.7L459.6 60.7L467.8 60.7L465.3 60.7L465.3 60.7L462.9 60.8L462.9 60.8L460.4 60.9L460.4 60.9L458.0 61.0L458.0 61.0L455.6 61.2L455.6 61.2L453.1 61.5L453.1 61.5L450.7 61.7L450.7 61.7L448.2 62.1L448.2 62.1L445.8 62.4L445.8 62.4L443.4 62.8L443.4 62.8L441.0 63.3L441.0 63.3L438.6 63.8L438.6 63.8L436.2 64.3L436.2 64.3L433.8 64.9L433.8 64.9L431.4 65.5L431.4 65.5L429.1 66.1L429.1 66.1L426.7 66.8L426.7 66.8L424.4 67.6L424.4 67.6L422.1 68.4L422.1 68.4L419.7 69.2L419.7 69.2L417.4 70.0L417.4 70.0L415.2 70.9L415.2 70.9L412.9 71.9L412.9 71.9L410.7 72.8L410.7 72.8L408.4 73.9L408.4 73.9L406.2 74.9L406.2 74.9L404.0 76.0L404.0 76.0L401.8 77.1L401.8 77.1L399.7 78.3L399.7 78.3L397.6 79.5L397.6 79.5L395.4 80.8L395.4 80.8L393.3 82.0L393.3 82.0L391.3 83.4L391.3 83.4L389.2 84.7L389.2 84.7L387.2 86.1L387.2 86.1L385.2 87.5L385.2 87.5L383.2 89.0L383.2 89.0L381.3 90.5L381.3 90.5L379.4 92.0L379.4 92.0L377.5 93.6L377.5 93.6L375.6 95.2L375.6 95.2L373.8 96.8L373.8 96.8L372.0 98.4L372.0 98.4L370.2 100.1L370.2 100.1L368.5 101.9L368.5 101.9L366.7 103.6L366.7 103.6L365.0 105.4L365.0 105.4L363.4 107.2L363.4 107.2L361.8 109.0L361.8 109.0L360.2 110.9L360.2 110.9L358.6 112.8L358.6 112.8L357.1 114.7L357.1 114.7L355.6 116.6L355.6 116.6L354.1 118.6L354.1 118.6L352.7 120.6L352.7 120.6L351.3 122.6L351.3 122.6L350.0 124.7L350.0 124.7L348.6 126.7L348.6 126.7L347.4 128.8L347.4 128.8L346.1 130.9L346.1 130.9L344.9 133.1L344.9 133.1L343.7 135.2L343.7 135.2L342.6 137.4L342.6 137.4L341.5 139.6L341.5 139.6L340.5 141.8L340.5 141.8L339.4 144.1L339.4 144.1L338.5 146.3L338.5 146.3L337.5 148.6L337.5 148.6L336.6 150.8L336.6 150.8L335.8 153.1L335.8 153.1L335.0 155.5L335.0 155.5L334.2 157.8L334.2 157.8L333.4 160.1L333.4 160.1L332.7 162.5L332.7 162.5L332.1 164.8L332.1 164.8L331.5 167.2L331.5 167.2L330.9 169.6L330.9 169.6L330.4 172.0L330.4 172.0L329.9 174.4L329.9 174.4L329.4 176.8L329.4 176.8L329.0 179.2L329.0 179.2L328.7 181.6L328.7 181.6L328.3 184.1L328.3 184.1L328.1 186.5L328.1 186.5L327.8 189.0L327.8 189.0L327.6 191.4L327.6 191.4L327.5 193.8L327.5 193.8L327.4 196.3L327.4 196.3L327.3 198.7L327.3 198.7L327.3 201.2L327.3 193.0L327.3 195.5L327.3 195.5L327.4 197.9L327.4 197.9L327.5 200.4L327.5 200.4L327.6 202.8L327.6 202.8L327.8 205.2L327.8 205.2L328.1 207.7L328.1 207.7L328.3 210.1L328.3 210.1L328.7 212.6L328.7 212.6L329.0 215.0L329.0 215.0L329.4 217.4L329.4 217.4L329.9 219.8L329.9 219.8L330.4 222.2L330.4 222.2L330.9 224.6L330.9 224.6L331.5 227.0L331.5 227.0L332.1 229.4L332.1 229.4L332.7 231.7L332.7 231.7L333.4 234.1L333.4 234.1L334.2 236.4L334.2 236.4L335.0 238.7L335.0 238.7L335.8 241.1L335.8 241.1L336.6 243.4L336.6 243.4L337.5 245.6L337.5 245.6L338.5 247.9L338.5 247.9L339.4 250.1L339.4 250.1L340.5 252.4L340.5 252.4L341.5 254.6L341.5 254.6L342.6 256.8L342.6 256.8L343.7 259.0L343.7 259.0L344.9 261.1L344.9 261.1L346.1 263.2L346.1 263.2L347.4 265.4L347.4 265.4L348.6 267.5L348.6 267.5L350.0 269.5L350.0 269.5L351.3 271.6L351.3 271.6L352.7 273.6L352.7 273.6L354.1 275.6L354.1 275.6L355.6 277.6L355.6 277.6L357.1 279.5L357.1 279.5L358.6 281.4L358.6 281.4L360.2 283.3L360.2 283.3L361.8 285.2L361.8 285.2L363.4 287.0L363.4 287.0L365.0 288.8L365.0 288.8L366.7 290.6L366.7 290.6L368.5 292.3L368.5 292.3L370.2 294.1L370.2 294.1L372.0 295.8L372.0 295.8L373.8 297.4L373.8 297.4L375.6 299.0L375.6 299.0L377.5 300.6L377.5 300.6Z" fill="#000"/><path d="M376.4 301.1L370.5 308.2M370.3 298.0L367.5 301.0M365.5 293.3L362.5 296.2M360.9 288.4L357.8 291.1M356.5 283.3L353.3 285.8M353.8 276.9L346.4 282.3M348.6 272.4L345.2 274.6M345.1 266.7L341.6 268.8M341.8 260.8L338.2 262.7M338.9 254.8L335.2 256.5M337.8 248.0L329.3 251.4M333.8 242.3L330.0 243.7M331.8 235.9L327.9 237.1M330.1 229.4L326.1 230.4M328.6 222.9L324.6 223.6M329.2 216.0L320.1 217.3M326.8 209.6L322.7 209.9M326.3 202.9L322.2 203.0M326.2 196.1L322.1 196.1M326.4 189.4L322.3 189.2M328.6 182.9L319.5 181.9M327.8 176.1L323.8 175.4M329.0 169.5L325.0 168.6M330.5 162.9L326.5 161.9M332.3 156.4L328.4 155.2M336.1 150.7L327.4 147.5M336.9 143.8L333.2 142.2M339.7 137.7L336.0 135.9M342.7 131.7L339.1 129.8M346.1 125.9L342.6 123.7M351.1 121.2L343.5 116.0M353.6 114.7L350.3 112.3M357.8 109.5L354.6 106.8M362.2 104.4L359.1 101.6M366.8 99.5L363.9 96.6M372.8 96.2L366.7 89.3M376.8 90.5L374.2 87.4M382.1 86.4L379.7 83.1M387.6 82.6L385.3 79.2M393.3 79.0L391.2 75.5M399.9 77.2L395.6 69.1M405.2 72.7L403.4 69.0M411.3 70.0L409.7 66.2M417.6 67.6L416.2 63.7M424.0 65.5L422.8 61.5M430.8 65.3L428.6 56.4M437.0 62.2L436.2 58.2M443.6 61.1L443.0 57.0M450.3 60.3L449.9 56.2M457.0 59.8L456.8 55.7M463.7 59.6L463.7 55.5M470.4 59.8L470.6 55.7M477.1 60.3L477.5 56.2M483.8 61.1L484.4 57.0M490.4 62.2L491.2 58.2M496.6 65.3L498.8 56.4M503.4 65.5L504.6 61.5M509.8 67.6L511.2 63.7M516.1 70.0L517.7 66.2M522.2 72.7L524.0 69.0M527.5 77.2L531.8 69.1M534.1 79.0L536.2 75.5M539.8 82.6L542.1 79.2M545.3 86.4L547.7 83.1M550.6 90.5L553.2 87.4M554.6 96.2L560.7 89.3M560.6 99.5L563.5 96.6M565.2 104.4L568.3 101.6M569.6 109.5L572.8 106.8M573.8 114.7L577.1 112.3M576.3 121.2L583.9 116.0M581.3 125.9L584.8 123.7M584.7 131.7L588.3 129.8M587.7 137.7L591.4 135.9M590.5 143.8L594.2 142.2M591.3 150.7L600.0 147.5M595.1 156.4L599.0 155.2M596.9 162.9L600.9 161.9M598.4 169.5L602.4 168.6M599.6 176.1L603.6 175.4M598.8 182.9L607.9 181.9M601.0 189.4L605.1 189.2M601.2 196.1L605.3 196.1M601.1 202.9L605.2 203.0M600.6 209.6L604.7 209.9M598.2 216.0L607.3 217.3M598.8 222.9L602.8 223.6M597.3 229.4L601.3 230.4M595.6 235.9L599.5 237.1M593.6 242.3L597.4 243.7M589.6 248.0L598.1 251.4M588.5 254.8L592.2 256.5M585.6 260.8L589.2 262.7M582.3 266.7L585.8 268.8M578.8 272.4L582.2 274.6M573.6 276.9L581.0 282.3M570.9 283.3L574.1 285.8M566.5 288.4L569.6 291.1M561.9 293.3L564.9 296.2M557.1 298.0L559.9 301.0M551.0 301.1L556.9 308.2" stroke="#fff" stroke-width="1" fill="none"/><text x="383.9" y="298.7" text-anchor="middle" font-size="17.4" font-weight="bold" letter-spacing=".35" fill="#fff">0</text><text x="348.5" y="249.9" text-anchor="middle" font-size="17.4" font-weight="bold" letter-spacing=".35" fill="#fff">10</text><text x="340.1" y="190.3" text-anchor="middle" font-size="17.4" font-weight="bold" letter-spacing=".35" fill="#fff">20</text><text x="360.7" y="133.7" text-anchor="middle" font-size="17.4" font-weight="bold" letter-spacing=".35" fill="#fff">30</text><text x="405.5" y="93.4" text-anchor="middle" font-size="17.4" font-weight="bold" letter-spacing=".35" fill="#fff">40</text><text x="463.9" y="78.8" text-anchor="middle" font-size="17.4" font-weight="bold" letter-spacing=".35" fill="#fff">50</text><text x="522.3" y="93.4" text-anchor="middle" font-size="17.4" font-weight="bold" letter-spacing=".35" fill="#fff">60</text><text x="567.1" y="133.7" text-anchor="middle" font-size="17.4" font-weight="bold" letter-spacing=".35" fill="#fff">70</text><text x="587.7" y="190.3" text-anchor="middle" font-size="17.4" font-weight="bold" letter-spacing=".35" fill="#fff">80</text><text x="579.3" y="249.9" text-anchor="middle" font-size="17.4" font-weight="bold" letter-spacing=".35" fill="#fff">90</text><text x="543.9" y="298.7" text-anchor="middle" font-size="17.4" font-weight="bold" letter-spacing=".35" fill="#fff">100</text><path d="M456.6 206.4L387.9 288.4" stroke="#fff" stroke-width="2.2"/><path d="M387.9 288.4L369.9 309.8" stroke="#fff" stroke-width="1.2"/><circle cx="463.7" cy="198.0" r="12" fill="#0000fe"/><text x="464.7" y="232.0" text-anchor="middle" font-size="18.5" fill="#fff">RPm</text>
</svg>
<div class="box" style="left:103px;top:268px;width:57px;">000,0</div>
<div class="box" style="left:433px;top:268px;width:60px;">00000</div>
<div class="box" style="left:4px;top:306px;width:57px;">04,32</div>
<div class="lbl" style="left:66px;top:308px;">:1</div>
<div class="box" style="left:101px;top:306px;width:61px;">01395</div>
<div class="lbl" style="left:167px;top:308px;">m</div>
<div class="box" style="left:217px;top:306px;width:57px;">000,0</div>
<div class="lbl" style="left:278px;top:308px;letter-spacing:-.4px;">Sec</div>
<div class="a" style="left:1px;top:338px;width:303px;height:522px;background:#000;"></div>
<div class="a" style="left:304px;top:338px;width:1px;height:183px;background:#9a9aa8;"></div>
<div class="gbtn" style="top:338px;height:22px;line-height:18px;">Press SPACE to starte</div>
<div class="gbtn" style="top:360px;height:26px;line-height:26px;">Press ENTER to abort</div>
<div class="a" style="left:642px;top:52px;width:135px;height:424px;box-sizing:border-box;background:#000080;border-left:1px solid #e4e4f0;border-top:1px solid #e4e4f0;border-bottom:1px solid #c8c8e0;"></div>
<div class="a" id="chartbg" style="left:777px;top:52px;width:813px;height:424px;background:#fff;"></div>
<div class="sbtn" style="top:92px;">7000</div>
<div class="sbtn" style="top:116px;">200</div>
<div class="sbtn" style="top:140px;">reset</div>
<div class="sbtn" style="top:164px;">skala</div>
<div class="sbtn" style="top:190px;">show</div>
<div class="a" style="left:728px;top:94px;font-size:16.3px;line-height:18px;font-weight:bold;color:#fff;letter-spacing:.5px;">Rpm</div>
<div class="a" style="left:731.5px;top:117px;font-size:16.5px;line-height:18px;font-weight:bold;color:#fff;letter-spacing:.6px;">Hk</div>
<svg id="chart" width="813" height="424" viewBox="777 52 813 424" style="left:777px;top:52px;"><path d="M846.0 88.5H1522.0M846.0 105.5H1522.0M846.0 123.5H1522.0M846.0 141.5H1522.0M846.0 158.5H1522.0M846.0 176.5H1522.0M846.0 194.5H1522.0M846.0 211.5H1522.0M846.0 229.5H1522.0M846.0 247.5H1522.0M846.0 264.5H1522.0M846.0 282.5H1522.0M846.0 300.5H1522.0M846.0 317.5H1522.0M846.0 335.5H1522.0M846.0 353.5H1522.0M846.0 370.5H1522.0M846.0 388.5H1522.0M846.0 406.5H1522.0M846.0 423.5H1522.0M879.5 87.5V441.0M913.5 87.5V441.0M947.5 87.5V441.0M980.5 87.5V441.0M1014.5 87.5V441.0M1048.5 87.5V441.0M1082.5 87.5V441.0M1116.5 87.5V441.0M1150.5 87.5V441.0M1184.5 87.5V441.0M1217.5 87.5V441.0M1251.5 87.5V441.0M1285.5 87.5V441.0M1319.5 87.5V441.0M1353.5 87.5V441.0M1387.5 87.5V441.0M1420.5 87.5V441.0M1454.5 87.5V441.0M1488.5 87.5V441.0" stroke="#7c7c7c" stroke-width="1" stroke-dasharray="3 3" fill="none" shape-rendering="crispEdges"/><path d="M842 88.5H845M1523 88H1527.5M842 105.5H845M1523 105H1527.5M842 123.5H845M1523 123H1527.5M842 141.5H845M1523 141H1527.5M842 158.5H845M1523 158H1527.5M842 176.5H845M1523 176H1527.5M842 194.5H845M1523 194H1527.5M842 211.5H845M1523 211H1527.5M842 229.5H845M1523 229H1527.5M842 247.5H845M1523 247H1527.5M842 264.5H845M1523 264H1527.5M842 282.5H845M1523 282H1527.5M842 300.5H845M1523 300H1527.5M842 317.5H845M1523 317H1527.5M842 335.5H845M1523 335H1527.5M842 353.5H845M1523 353H1527.5M842 370.5H845M1523 370H1527.5M842 388.5H845M1523 388H1527.5M842 406.5H845M1523 406H1527.5M842 423.5H845M1523 423H1527.5M842 441.5H845M1523 441H1527.5" stroke="#000" stroke-width="1.6" fill="none"/><path d="M845.5 441V445M913.2 441V445M980.9 441V445M1048.6 441V445M1116.3 441V445M1184.0 441V445M1251.7 441V445M1319.4 441V445M1387.1 441V445M1454.8 441V445M1522.5 441V445" stroke="#000" stroke-width="1.4" fill="none"/><path d="M845 86.5V442M844 441H1523M1522 86.5V442" stroke="#000" stroke-width="2.4" fill="none"/><text x="794" y="78.5" font-size="23.5">Hp</text><text x="813.5" y="99.2" font-size="22.6" text-anchor="middle">200</text><text x="1539.5" y="99.1" font-size="22.8">19.0</text><text x="813.5" y="134.5" font-size="22.6" text-anchor="middle">180</text><text x="1539.5" y="134.4" font-size="22.8">18.0</text><text x="813.5" y="169.9" font-size="22.6" text-anchor="middle">160</text><text x="1539.5" y="169.8" font-size="22.8">17.0</text><text x="813.5" y="205.2" font-size="22.6" text-anchor="middle">140</text><text x="1539.5" y="205.2" font-size="22.8">16.0</text><text x="813.5" y="240.6" font-size="22.6" text-anchor="middle">120</text><text x="1539.5" y="240.5" font-size="22.8">15.0</text><text x="813.5" y="275.9" font-size="22.6" text-anchor="middle">100</text><text x="1539.5" y="275.9" font-size="22.8">14.0</text><text x="813.5" y="311.3" font-size="22.6" text-anchor="middle">80</text><text x="1539.5" y="311.2" font-size="22.8">13.0</text><text x="813.5" y="346.7" font-size="22.6" text-anchor="middle">60</text><text x="1539.5" y="346.6" font-size="22.8">12.0</text><text x="813.5" y="382.0" font-size="22.6" text-anchor="middle">40</text><text x="1539.5" y="381.9" font-size="22.8">11.0</text><text x="813.5" y="417.4" font-size="22.6" text-anchor="middle">20</text><text x="1539.5" y="417.3" font-size="22.8">10.0</text><text x="813.5" y="452.7" font-size="22.6" text-anchor="middle">0</text><text x="1539.5" y="452.6" font-size="22.8">9.0</text><text x="846.5" y="470.3" font-size="23" text-anchor="middle">0</text><text x="914.2" y="470.3" font-size="23" text-anchor="middle">7</text><text x="981.9" y="470.3" font-size="23" text-anchor="middle">14</text><text x="1049.6" y="470.3" font-size="23" text-anchor="middle">21</text><text x="1117.3" y="470.3" font-size="23" text-anchor="middle">28</text><text x="1185.0" y="470.3" font-size="23" text-anchor="middle">35</text><text x="1252.7" y="470.3" font-size="23" text-anchor="middle">42</text><text x="1320.4" y="470.3" font-size="23" text-anchor="middle">49</text><text x="1388.1" y="470.3" font-size="23" text-anchor="middle">56</text><text x="1455.8" y="470.3" font-size="23" text-anchor="middle">63</text><text x="1523.5" y="470.3" font-size="23" text-anchor="middle">70</text><polyline points="929.7,439.6 934.4,427.3 940.1,416.0 946.7,406.1 953.3,400.8 957.1,397.1 968.4,388.6 981.6,378.2 995.8,365.0 1013.7,350.8 1028.8,336.6 1040.2,324.4 1044.9,315.9 1054.2,308.2 1064.5,295.0 1077.8,290.7 1091.0,290.7 1105.1,288.8 1115.5,279.3 1124.0,273.7 1136.3,256.7 1148.6,248.2 1152.4,241.6 1160.8,238.7 1166.5,232.1 1174.1,227.8 1181.6,226.5 1185.4,220.8 1191.1,220.2 1200.5,212.3 1207.1,205.1 1212.8,201.9 1218.4,195.3 1226.9,186.8 1236.4,181.2 1243.9,176.1 1249.6,174.5 1253.4,172.3 1263.8,170.4 1269.4,167.9 1284.5,166.6 1292.1,168.9 1297.8,168.3 1309.1,173.6 1318.5,180.2 1327.0,182.1 1332.7,187.8 1337.4,188.3 1343.1,194.4 1348.7,198.7" fill="none" stroke="#e6801a" stroke-width="1.85" stroke-linejoin="round"/><polyline points="1353.8,200.0 1361.0,202.5 1365.7,204.8 1373.3,210.4 1379.9,214.2 1383.7,222.7 1389.3,227.4 1393.1,232.5 1399.7,234.0 1409.2,238.7 1412.0,247.2 1416.7,252.0 1420.5,254.2 1430.9,253.9 1435.6,258.6 1441.3,261.8 1445.0,256.1 1447.9,261.4 1452.6,264.2 1454.5,282.2 1455.3,320.0 1455.2,333.4 1452.4,342.9 1450.9,348.5" fill="none" stroke="#e6801a" stroke-width="1.85" stroke-linejoin="round"/><polyline points="1450.1,374.0 1450.1,387.2 1449.0,403.3 1448.2,429.7" fill="none" stroke="#e6801a" stroke-width="1.5" stroke-linejoin="round"/><polyline points="848.5,388.0 848.5,421.6 862.7,422.0 889.0,424.4 915.5,426.3 928.7,427.0 928.7,431.0 926.0,432.6 926.0,436.7 928.7,439.6" fill="none" stroke="#0000c8" stroke-width="1.9" stroke-linejoin="round"/><polyline points="1308.5,381.0 1310.8,377.2 1312.5,379.0 1314.5,376.8 1316.0,378.7 1318.3,376.9 1323.0,371.6 1327.8,369.3 1328.7,359.9 1333.4,352.7 1339.1,351.4 1343.8,344.8 1348.5,332.5 1351.4,325.9 1356.1,324.9 1361.8,320.2 1368.4,307.0 1370.2,304.2 1373.1,303.2 1375.9,295.7 1379.7,297.2 1385.6,289.7 1389.3,287.5 1390.3,280.3 1395.9,273.7 1396.3,269.9 1402.6,262.3 1411.0,252.9 1414.8,247.2 1420.5,241.6 1429.0,235.9 1431.5,237.2 1434.7,248.2 1437.5,267.0 1439.4,293.5 1441.1,318.3 1442.9,346.6 1443.3,384.4 1445.8,412.7 1448.2,438.2" fill="none" stroke="#0000c8" stroke-width="1.8" stroke-linejoin="round"/></svg>
<div class="a" id="bigtxt" style="left:326px;top:510px;font-size:30.45px;line-height:36px;font-style:italic;color:#fff;white-space:pre;">C:\dynodat\focusst03.acc</div>
<div class="a" id="win1" style="left:1px;top:521px;width:624px;height:340px;box-sizing:border-box;border-radius:7px 7px 2px 2px;border:1px solid rgba(200,205,225,.75);background:linear-gradient(180deg,rgba(0,0,0,0) 0,rgba(0,0,0,0) 30px,rgba(0,0,20,.55) 60px,rgba(0,0,20,.7) 100%),linear-gradient(90deg,rgba(46,46,46,.55) 0,rgba(30,30,30,.45) 296px,rgba(90,94,135,.42) 310px,rgba(90,94,135,.42) 100%);backdrop-filter:blur(2.6px);-webkit-backdrop-filter:blur(2.6px);"></div>
<div class="a" style="left:2px;top:549px;width:4px;height:307px;background:linear-gradient(90deg,rgba(150,150,150,.75),rgba(70,70,70,.6));"></div>
<div class="a" style="left:4px;top:524px;width:212px;height:21px;border-radius:10px;background:rgba(185,185,185,.8);filter:blur(5px);"></div>
<div class="a" id="w1title" style="left:8px;top:528px;font-size:12px;line-height:15px;color:#161616;white-space:pre;letter-spacing:-.14px;">Speed / Time   WWW.DYNOMET.DK</div>
<div class="a" style="left:6px;top:549px;width:613px;height:306px;box-sizing:border-box;border:1px solid #1a1a1a;background:#fff;box-shadow:0 0 0 1px rgba(190,195,210,.8);"></div>
<svg id="c1" width="611" height="305" viewBox="7 549 611 305" style="left:7px;top:549px;overflow:hidden"><path d="M56.0 575.5H525.0M56.0 588.5H525.0M56.0 600.5H525.0M56.0 613.5H525.0M56.0 626.5H525.0M56.0 638.5H525.0M56.0 651.5H525.0M56.0 664.5H525.0M56.0 677.5H525.0M56.0 689.5H525.0M56.0 702.5H525.0M56.0 715.5H525.0M56.0 727.5H525.0M56.0 740.5H525.0M56.0 753.5H525.0M56.0 766.5H525.0M56.0 778.5H525.0M56.0 791.5H525.0M56.0 804.5H525.0M56.0 816.5H525.0M78.5 575.5V829.5M102.5 575.5V829.5M125.5 575.5V829.5M148.5 575.5V829.5M172.5 575.5V829.5M196.5 575.5V829.5M219.5 575.5V829.5M242.5 575.5V829.5M266.5 575.5V829.5M290.5 575.5V829.5M313.5 575.5V829.5M336.5 575.5V829.5M360.5 575.5V829.5M384.5 575.5V829.5M407.5 575.5V829.5M430.5 575.5V829.5M454.5 575.5V829.5M478.5 575.5V829.5M501.5 575.5V829.5M524.5 575.5V829.5" stroke="#848484" stroke-width="1" stroke-dasharray="3 3" fill="none" shape-rendering="crispEdges"/><path d="M55.3 829V834M102.3 829V834M149.3 829V834M196.3 829V834M243.3 829V834M290.3 829V834M337.3 829V834M384.3 829V834M431.3 829V834M478.3 829V834M525.3 829V834" stroke="#000" stroke-width="1.6" fill="none"/><path d="M55 575V830.5M54 829.5H525" stroke="#000" stroke-width="2.2" fill="none"/><text x="35" y="837.1" font-family="Liberation Serif,serif" font-weight="bold" font-size="16" text-anchor="middle" textLength="8.4" lengthAdjust="spacingAndGlyphs">0</text><text x="35" y="811.7" font-family="Liberation Serif,serif" font-weight="bold" font-size="16" text-anchor="middle" textLength="17.8" lengthAdjust="spacingAndGlyphs">18</text><text x="35" y="786.3" font-family="Liberation Serif,serif" font-weight="bold" font-size="16" text-anchor="middle" textLength="17.8" lengthAdjust="spacingAndGlyphs">36</text><text x="35" y="760.9" font-family="Liberation Serif,serif" font-weight="bold" font-size="16" text-anchor="middle" textLength="17.8" lengthAdjust="spacingAndGlyphs">54</text><text x="35" y="735.5" font-family="Liberation Serif,serif" font-weight="bold" font-size="16" text-anchor="middle" textLength="17.8" lengthAdjust="spacingAndGlyphs">72</text><text x="35" y="710.1" font-family="Liberation Serif,serif" font-weight="bold" font-size="16" text-anchor="middle" textLength="17.8" lengthAdjust="spacingAndGlyphs">90</text><text x="35" y="684.7" font-family="Liberation Serif,serif" font-weight="bold" font-size="16" text-anchor="middle" textLength="27.2" lengthAdjust="spacingAndGlyphs">108</text><text x="35" y="659.3" font-family="Liberation Serif,serif" font-weight="bold" font-size="16" text-anchor="middle" textLength="27.2" lengthAdjust="spacingAndGlyphs">126</text><text x="35" y="633.9" font-family="Liberation Serif,serif" font-weight="bold" font-size="16" text-anchor="middle" textLength="27.2" lengthAdjust="spacingAndGlyphs">144</text><text x="35" y="608.5" font-family="Liberation Serif,serif" font-weight="bold" font-size="16" text-anchor="middle" textLength="27.2" lengthAdjust="spacingAndGlyphs">162</text><text x="35" y="583.1" font-family="Liberation Serif,serif" font-weight="bold" font-size="16" text-anchor="middle" textLength="27.2" lengthAdjust="spacingAndGlyphs">180</text><rect x="19" y="552" width="46" height="21.2" fill="#fff"/><rect x="20" y="834" width="40" height="18" fill="#fff"/><text x="41.7" y="849.5" font-family="Liberation Serif,serif" font-weight="bold" font-size="16" text-anchor="middle" textLength="8.4" lengthAdjust="spacingAndGlyphs">0</text><text x="88.7" y="849.5" font-family="Liberation Serif,serif" font-weight="bold" font-size="16" text-anchor="middle" textLength="8.4" lengthAdjust="spacingAndGlyphs">4</text><text x="135.7" y="849.5" font-family="Liberation Serif,serif" font-weight="bold" font-size="16" text-anchor="middle" textLength="8.4" lengthAdjust="spacingAndGlyphs">8</text><text x="182.7" y="849.5" font-family="Liberation Serif,serif" font-weight="bold" font-size="16" text-anchor="middle" textLength="17.8" lengthAdjust="spacingAndGlyphs">13</text><text x="229.7" y="849.5" font-family="Liberation Serif,serif" font-weight="bold" font-size="16" text-anchor="middle" textLength="17.8" lengthAdjust="spacingAndGlyphs">17</text><text x="276.7" y="849.5" font-family="Liberation Serif,serif" font-weight="bold" font-size="16" text-anchor="middle" textLength="17.8" lengthAdjust="spacingAndGlyphs">21</text><text x="323.7" y="849.5" font-family="Liberation Serif,serif" font-weight="bold" font-size="16" text-anchor="middle" textLength="17.8" lengthAdjust="spacingAndGlyphs">25</text><text x="370.7" y="849.5" font-family="Liberation Serif,serif" font-weight="bold" font-size="16" text-anchor="middle" textLength="17.8" lengthAdjust="spacingAndGlyphs">29</text><text x="417.7" y="849.5" font-family="Liberation Serif,serif" font-weight="bold" font-size="16" text-anchor="middle" textLength="17.8" lengthAdjust="spacingAndGlyphs">34</text><text x="464.7" y="849.5" font-family="Liberation Serif,serif" font-weight="bold" font-size="16" text-anchor="middle" textLength="17.8" lengthAdjust="spacingAndGlyphs">38</text><text x="511.7" y="849.5" font-family="Liberation Serif,serif" font-weight="bold" font-size="16" text-anchor="middle" textLength="17.8" lengthAdjust="spacingAndGlyphs">42</text><text id="kmh" x="20.5" y="570.5" font-family="DejaVu Sans,Liberation Sans,sans-serif" font-weight="bold" font-size="15" textLength="43.5" lengthAdjust="spacingAndGlyphs">Km/h</text><text id="fn1" x="64.5" y="566" font-family="DejaVu Sans,Liberation Sans,sans-serif" font-weight="bold" font-size="15" textLength="198" lengthAdjust="spacingAndGlyphs">C:\dynodat\focusst03.acc</text><polyline points="62.0,796.2 75.0,796.2 80.0,794.5 90.0,787.7 100.0,780.0 110.0,771.5 120.0,762.6 127.5,755.0 144.0,738.0 168.0,714.0 192.0,690.0 216.0,665.2 240.0,642.8 260.0,626.8 280.0,614.0 300.0,602.8 320.0,594.0 335.0,587.0 344.8,583.0 352.0,584.8 368.0,593.2 384.0,601.2 400.0,608.0 420.0,615.2 440.0,622.0 460.0,628.0 480.0,632.8 500.0,637.2 519.2,641.2" fill="none" stroke="#000" stroke-width="2" stroke-linejoin="round"/></svg>
<div class="a" id="taskbar" style="left:0;top:860px;width:1600px;height:40px;background:linear-gradient(#5f7fb8 0,#3a5da6 2px,#24458f 4px,#213f8a 50%,#1f3b84 100%);"></div>
<div class="a" style="left:0;top:860px;width:1600px;height:40px;background:linear-gradient(90deg,rgba(20,40,110,.0) 0,rgba(40,80,170,.25) 20%,rgba(20,50,130,.1) 50%,rgba(10,30,90,.25) 85%,rgba(10,25,80,.4) 100%);"></div>
<div id="hpwin" style="position:absolute;left:0;top:0;width:0;height:0;z-index:5;">
<div class="a" id="win2" style="left:960px;top:516px;width:634px;height:350px;box-sizing:border-box;border-radius:8px 8px 6px 6px;border:1px solid rgba(200,205,225,.9);background:linear-gradient(180deg,rgba(10,10,30,0) 0,rgba(10,10,30,0) 40px,rgba(10,10,34,.75) 200px,rgba(14,16,44,.85) 100%),linear-gradient(100deg,rgba(125,127,145,.95) 0,rgba(80,82,102,.95) 20%,rgba(34,34,52,.97) 27%,rgba(62,64,86,.95) 37%,rgba(32,32,50,.97) 44%,rgba(28,28,46,.97) 56%,rgba(66,68,90,.95) 64%,rgba(30,30,48,.97) 72%,rgba(44,46,68,.97) 100%);box-shadow:0 0 0 1px rgba(0,0,20,.55),0 5px 12px 1px rgba(0,0,0,.6);"></div>
<div class="a" style="left:964px;top:519px;width:186px;height:22px;border-radius:11px;background:rgba(215,215,225,.85);filter:blur(5px);"></div>
<div class="a" id="w2title" style="left:988px;top:522px;font-size:12px;line-height:15px;color:#0c0c10;white-space:pre;">hp Nm  WWW.DYNOMET.DK</div>
<svg width="17" height="17" viewBox="0 0 33 33" style="left:967px;top:521px;"><circle cx="16" cy="14.1" r="12.3" fill="#0f8f8c" stroke="#000" stroke-width="1.5"/><path d="M10.4 8.2q2.500-2.400 5.800-2.400t5.800 2.400h-2.200v21.300h-6.800V8.200z" fill="#000"/><rect x="13" y="7.600" width="6.800" height="22" fill="#7a2410"/><rect x="13.900" y="7.600" width="5" height="22" fill="#d8902c"/><rect x="15.300" y="7.600" width="2.200" height="22" fill="#fbe85a"/><rect x="11.100" y="29.500" width="6.100" height="2.800" fill="#000"/><rect x="17.200" y="29.500" width="4.800" height="2.800" fill="#8c1010"/><path d="M1.100 26.900L6.900 20.600L10.400 16.400L11.800 18.800L13 18.100V22L10.400 23.200L9.300 25.300L8.100 23.400L1.800 27.400z" fill="#f6f212" stroke="#000" stroke-width=".7" stroke-linejoin="round"/><path d="M32.600 3.400L26.500 9L24.700 10.400L23.300 8L21.900 9.900L20 13.200L21.900 14.100L22.300 16.200H23.700L25.600 12.700L27 10.800L32.200 4.400z" fill="#f6f212" stroke="#000" stroke-width=".7" stroke-linejoin="round"/></svg>
<div class="a" style="left:1485px;top:516px;width:104px;height:20px;box-sizing:border-box;border:1px solid rgba(225,228,240,.85);border-top:none;border-radius:0 0 5px 5px;overflow:hidden;box-shadow:0 0 0 1px rgba(20,20,30,.6);"><div class="a" style="left:0;top:0;width:28px;height:19px;background:linear-gradient(#9a9cac 0,#6c6e80 45%,#3c3e50 50%,#585a6c 100%);border-right:1px solid rgba(225,228,240,.8);"></div><div class="a" style="left:29px;top:0;width:26px;height:19px;background:linear-gradient(#9a9cac 0,#6c6e80 45%,#3c3e50 50%,#585a6c 100%);border-right:1px solid rgba(225,228,240,.8);"></div><div class="a" style="left:56px;top:0;width:47px;height:19px;background:linear-gradient(#e2a090 0,#d26a56 45%,#b8321c 50%,#c8452c 85%,#d8684c 100%);"></div><div class="a" style="left:9px;top:9px;width:10px;height:3px;background:#c9cad6;border:1px solid #555868;border-radius:1px;"></div><div class="a" style="left:36px;top:4px;width:8px;height:6px;border:2px solid #f2f2f6;outline:1px solid #555868;box-shadow:inset 0 0 0 1px #555868;"></div><div class="a" style="left:56px;top:-1px;width:47px;height:19px;text-align:center;font-size:15px;line-height:19px;font-weight:bold;color:#fff;text-shadow:0 0 2px #40100a,0 0 1px #40100a;">x</div></div>
<div class="a" style="left:965px;top:544px;width:625px;height:316px;box-sizing:border-box;border:1px solid #15151c;background:#fff;box-shadow:0 0 0 1px rgba(200,204,220,.75);"></div>
<svg id="c2" width="623" height="314" viewBox="966 545 623 314" style="left:966px;top:545px;overflow:hidden"><path d="M1020.5 571.5H1535.0M1020.5 584.5H1535.0M1020.5 597.5H1535.0M1020.5 610.5H1535.0M1020.5 623.5H1535.0M1020.5 636.5H1535.0M1020.5 649.5H1535.0M1020.5 662.5H1535.0M1020.5 675.5H1535.0M1020.5 688.5H1535.0M1020.5 702.5H1535.0M1020.5 715.5H1535.0M1020.5 728.5H1535.0M1020.5 741.5H1535.0M1020.5 754.5H1535.0M1020.5 767.5H1535.0M1020.5 780.5H1535.0M1020.5 793.5H1535.0M1020.5 806.5H1535.0M1020.5 819.5H1535.0M1044.5 571.5V832.5M1070.5 571.5V832.5M1096.5 571.5V832.5M1122.5 571.5V832.5M1147.5 571.5V832.5M1173.5 571.5V832.5M1199.5 571.5V832.5M1225.5 571.5V832.5M1250.5 571.5V832.5M1276.5 571.5V832.5M1302.5 571.5V832.5M1328.5 571.5V832.5M1354.5 571.5V832.5M1379.5 571.5V832.5M1405.5 571.5V832.5M1431.5 571.5V832.5M1457.5 571.5V832.5M1482.5 571.5V832.5M1508.5 571.5V832.5" stroke="#848484" stroke-width="1" stroke-dasharray="3 3" fill="none" shape-rendering="crispEdges"/><path d="M1019.5 832V836M1045.3 832V836M1071.0 832V836M1096.8 832V836M1122.6 832V836M1148.4 832V836M1174.2 832V836M1199.9 832V836M1225.7 832V836M1251.5 832V836M1277.2 832V836M1303.0 832V836M1328.8 832V836M1354.6 832V836M1380.3 832V836M1406.1 832V836M1431.9 832V836M1457.7 832V836M1483.5 832V836M1509.2 832V836M1535.0 832V836" stroke="#000" stroke-width="1.2" fill="none"/><path d="M1019.5 571V833.5M1018.5 832.5H1536M1535 571V833.5" stroke="#000" stroke-width="2.2" fill="none"/><text x="995" y="840.0" font-family="Liberation Serif,serif" font-weight="bold" font-size="16.6" text-anchor="middle" textLength="8.8" lengthAdjust="spacingAndGlyphs">0</text><text x="1566" y="840.0" font-family="Liberation Serif,serif" font-weight="bold" font-size="16.6" text-anchor="middle" textLength="8.8" lengthAdjust="spacingAndGlyphs">0</text><text x="995" y="813.9" font-family="Liberation Serif,serif" font-weight="bold" font-size="16.6" text-anchor="middle" textLength="18.6" lengthAdjust="spacingAndGlyphs">30</text><text x="1566" y="813.9" font-family="Liberation Serif,serif" font-weight="bold" font-size="16.6" text-anchor="middle" textLength="18.6" lengthAdjust="spacingAndGlyphs">52</text><text x="995" y="787.8" font-family="Liberation Serif,serif" font-weight="bold" font-size="16.6" text-anchor="middle" textLength="18.6" lengthAdjust="spacingAndGlyphs">60</text><text x="1566" y="787.8" font-family="Liberation Serif,serif" font-weight="bold" font-size="16.6" text-anchor="middle" textLength="28.4" lengthAdjust="spacingAndGlyphs">104</text><text x="995" y="761.7" font-family="Liberation Serif,serif" font-weight="bold" font-size="16.6" text-anchor="middle" textLength="18.6" lengthAdjust="spacingAndGlyphs">90</text><text x="1566" y="761.7" font-family="Liberation Serif,serif" font-weight="bold" font-size="16.6" text-anchor="middle" textLength="28.4" lengthAdjust="spacingAndGlyphs">156</text><text x="995" y="735.6" font-family="Liberation Serif,serif" font-weight="bold" font-size="16.6" text-anchor="middle" textLength="28.4" lengthAdjust="spacingAndGlyphs">120</text><text x="1566" y="735.6" font-family="Liberation Serif,serif" font-weight="bold" font-size="16.6" text-anchor="middle" textLength="28.4" lengthAdjust="spacingAndGlyphs">208</text><text x="995" y="709.5" font-family="Liberation Serif,serif" font-weight="bold" font-size="16.6" text-anchor="middle" textLength="28.4" lengthAdjust="spacingAndGlyphs">150</text><text x="1566" y="709.5" font-family="Liberation Serif,serif" font-weight="bold" font-size="16.6" text-anchor="middle" textLength="28.4" lengthAdjust="spacingAndGlyphs">260</text><text x="995" y="683.4" font-family="Liberation Serif,serif" font-weight="bold" font-size="16.6" text-anchor="middle" textLength="28.4" lengthAdjust="spacingAndGlyphs">180</text><text x="1566" y="683.4" font-family="Liberation Serif,serif" font-weight="bold" font-size="16.6" text-anchor="middle" textLength="28.4" lengthAdjust="spacingAndGlyphs">312</text><text x="995" y="657.3" font-family="Liberation Serif,serif" font-weight="bold" font-size="16.6" text-anchor="middle" textLength="28.4" lengthAdjust="spacingAndGlyphs">210</text><text x="1566" y="657.3" font-family="Liberation Serif,serif" font-weight="bold" font-size="16.6" text-anchor="middle" textLength="28.4" lengthAdjust="spacingAndGlyphs">364</text><text x="995" y="631.2" font-family="Liberation Serif,serif" font-weight="bold" font-size="16.6" text-anchor="middle" textLength="28.4" lengthAdjust="spacingAndGlyphs">240</text><text x="1566" y="631.2" font-family="Liberation Serif,serif" font-weight="bold" font-size="16.6" text-anchor="middle" textLength="28.4" lengthAdjust="spacingAndGlyphs">416</text><text x="995" y="605.1" font-family="Liberation Serif,serif" font-weight="bold" font-size="16.6" text-anchor="middle" textLength="28.4" lengthAdjust="spacingAndGlyphs">270</text><text x="1566" y="605.1" font-family="Liberation Serif,serif" font-weight="bold" font-size="16.6" text-anchor="middle" textLength="28.4" lengthAdjust="spacingAndGlyphs">468</text><text x="995" y="579.0" font-family="Liberation Serif,serif" font-weight="bold" font-size="16.6" text-anchor="middle" textLength="28.4" lengthAdjust="spacingAndGlyphs">300</text><text x="1566" y="579.0" font-family="Liberation Serif,serif" font-weight="bold" font-size="16.6" text-anchor="middle" textLength="28.4" lengthAdjust="spacingAndGlyphs">520</text><polyline points="1065.8,825.1 1070.0,819.7 1075.9,813.9 1084.0,808.5 1087.5,808.1 1095.7,802.9 1101.5,799.9 1106.2,796.4 1113.2,792.9 1117.9,789.4 1122.5,787.5 1135.4,780.0 1149.4,769.5 1161.1,760.2 1175.1,752.5 1186.7,747.8 1198.4,745.0 1205.4,742.2 1212.4,741.1 1224.1,733.4 1238.1,721.7 1250.9,713.5 1261.4,707.2 1271.9,703.5 1287.1,693.7 1303.5,682.0 1320.0,670.3 1333.0,662.4 1339.0,660.0 1400.0,650.0 1462.0,643.0 1474.0,646.5 1484.0,647.6 1496.0,647.6 1508.0,647.0 1514.0,646.4 1518.0,643.0 1523.0,643.0 1529.0,658.0 1532.4,696.0 1533.0,740.0 1531.5,783.0" fill="none" stroke="#7a0c0c" stroke-width="2" stroke-linejoin="round"/><polyline points="1064.9,796.4 1067.7,780.0 1070.0,767.2 1074.2,755.5 1080.5,745.0 1086.4,740.4 1095.7,729.9 1106.2,720.5 1116.7,712.8 1126.0,707.7 1136.6,702.6 1149.4,691.4 1162.2,680.1 1169.2,679.2 1176.2,676.9 1186.7,680.8 1198.4,683.2 1205.4,686.0 1218.3,686.0 1224.1,683.2 1235.8,676.2 1247.4,671.0 1256.8,669.9 1275.4,669.6 1282.4,668.5 1291.8,665.7 1303.5,663.3 1315.1,660.5 1321.0,659.6 1336.0,656.0 1352.0,659.5 1370.0,660.6 1380.0,663.0 1392.0,668.0 1408.0,673.0 1427.0,681.0 1446.0,685.0 1458.0,688.0 1472.0,697.0 1486.0,702.4 1502.0,704.0 1510.0,708.0 1522.0,705.6 1529.0,716.0 1531.6,732.0 1533.0,760.0 1533.3,790.0 1531.0,801.5" fill="none" stroke="#15801c" stroke-width="2" stroke-linejoin="round"/><rect x="979" y="549" width="24" height="20" fill="#fff"/><rect x="1548" y="549" width="27.5" height="22" fill="#fff"/><rect x="975" y="836" width="30" height="18" fill="#fff"/><text x="1013.2" y="851" font-family="Liberation Serif,serif" font-weight="bold" font-size="16.6" text-anchor="middle" textLength="28.4" lengthAdjust="spacingAndGlyphs">300</text><text x="1064.8" y="851" font-family="Liberation Serif,serif" font-weight="bold" font-size="16.6" text-anchor="middle" textLength="28.4" lengthAdjust="spacingAndGlyphs">900</text><text x="1116.3" y="851" font-family="Liberation Serif,serif" font-weight="bold" font-size="16.6" text-anchor="middle" textLength="38.2" lengthAdjust="spacingAndGlyphs">1500</text><text x="1167.9" y="851" font-family="Liberation Serif,serif" font-weight="bold" font-size="16.6" text-anchor="middle" textLength="38.2" lengthAdjust="spacingAndGlyphs">2100</text><text x="1219.4" y="851" font-family="Liberation Serif,serif" font-weight="bold" font-size="16.6" text-anchor="middle" textLength="38.2" lengthAdjust="spacingAndGlyphs">2700</text><text x="1271.0" y="851" font-family="Liberation Serif,serif" font-weight="bold" font-size="16.6" text-anchor="middle" textLength="38.2" lengthAdjust="spacingAndGlyphs">3300</text><text x="1322.5" y="851" font-family="Liberation Serif,serif" font-weight="bold" font-size="16.6" text-anchor="middle" textLength="38.2" lengthAdjust="spacingAndGlyphs">3900</text><text x="1374.0" y="851" font-family="Liberation Serif,serif" font-weight="bold" font-size="16.6" text-anchor="middle" textLength="38.2" lengthAdjust="spacingAndGlyphs">4500</text><text x="1425.6" y="851" font-family="Liberation Serif,serif" font-weight="bold" font-size="16.6" text-anchor="middle" textLength="38.2" lengthAdjust="spacingAndGlyphs">5100</text><text x="1477.2" y="851" font-family="Liberation Serif,serif" font-weight="bold" font-size="16.6" text-anchor="middle" textLength="38.2" lengthAdjust="spacingAndGlyphs">5700</text><text x="1528.7" y="851" font-family="Liberation Serif,serif" font-weight="bold" font-size="16.6" text-anchor="middle" textLength="38.2" lengthAdjust="spacingAndGlyphs">6300</text><text x="980.5" y="565.6" font-family="DejaVu Sans,Liberation Sans,sans-serif" font-weight="bold" font-size="15" textLength="21.5" lengthAdjust="spacingAndGlyphs">Hp</text><text x="1548.7" y="568" font-family="DejaVu Sans,Liberation Sans,sans-serif" font-weight="bold" font-size="15" textLength="26" lengthAdjust="spacingAndGlyphs">Nm</text><text id="fn2" x="1029" y="561.7" font-family="DejaVu Sans,Liberation Sans,sans-serif" font-weight="bold" font-size="15" textLength="198" lengthAdjust="spacingAndGlyphs">C:\dynodat\focusst03.acc</text><rect x="1306" y="642.5" width="154" height="18.1" fill="#fff"/><rect x="1429" y="625" width="149" height="17.6" fill="#fff"/><text id="an1" x="1307" y="657" font-family="DejaVu Sans,Liberation Sans,sans-serif" font-weight="bold" font-size="14.8" textLength="151" lengthAdjust="spacingAndGlyphs" fill="#15801c">348.7Nm/3935Rpm</text><text id="an2" x="1430" y="640" font-family="DejaVu Sans,Liberation Sans,sans-serif" font-weight="bold" font-size="14.8" textLength="145.6" lengthAdjust="spacingAndGlyphs" fill="#7a0c0c">220.8Hp/5356Rpm</text><path d="M1332.5 654V663" stroke="#15801c" stroke-width="2"/></svg>
<svg id="tb" width="1600" height="40" viewBox="0 860 1600 40" style="left:0;top:860px;overflow:hidden"><defs><radialGradient id="orb" cx="50%" cy="35%" r="65%"><stop offset="0" stop-color="#9ccaf0"/><stop offset=".45" stop-color="#3f7fc6"/><stop offset=".8" stop-color="#1f4f9c"/><stop offset="1" stop-color="#2a9ad8"/></radialGradient><radialGradient id="orbg" cx="50%" cy="100%" r="60%"><stop offset="0" stop-color="#5fe0ff" stop-opacity=".9"/><stop offset="1" stop-color="#5fe0ff" stop-opacity="0"/></radialGradient><linearGradient id="fold" x1="0" y1="0" x2="0" y2="1"><stop offset="0" stop-color="#fbeeb4"/><stop offset="1" stop-color="#e9c466"/></linearGradient><linearGradient id="iee" x1="0" y1="0" x2="0" y2="1"><stop offset="0" stop-color="#7fd6f8"/><stop offset="1" stop-color="#1c8fd8"/></linearGradient></defs><circle cx="27" cy="881" r="18.5" fill="url(#orb)" stroke="#9fc3e8" stroke-width="1.2"/><circle cx="27" cy="881" r="17.5" fill="url(#orbg)"/><ellipse cx="27" cy="872" rx="14" ry="8" fill="#fff" opacity=".25"/><path d="M19.5 871.5q4-2.2 7.5-.6l-1.6 8.4q-3.6-1.6-7.6.6z" fill="#f0642a"/><path d="M28.6 871.6q3.8 1.8 8-.4l-1.6 8.4q-4 2-8-.2z" fill="#8cc43c"/><path d="M17.4 881.4q4-2.2 7.6-.6l-1.6 8.4q-3.6-1.8-7.6.6z" fill="#3c9ee0"/><path d="M26.6 881.6q3.8 1.8 8-.4l-1.7 8.4q-4 2-8-.2z" fill="#fcc42c"/><g transform="translate(89.5,879.5)"><clipPath id="iec"><path d="M-30-30h60v60h-60zM12.900 0a12.900 12.900 0 1 0-25.800 0a12.900 12.900 0 1 0 25.800 0z" clip-rule="evenodd"/></clipPath><g clip-path="url(#iec)"><ellipse rx="18" ry="8.800" transform="rotate(-40)" fill="none" stroke="#e8b818" stroke-width="2.600"/></g><path d="M-12.6 1.500a12.600 12.600 0 1 1 24.900 2.600h-17.800a5.700 5.700 0 0 0 10.800 1.600h6.300a12.600 12.600 0 0 1-24.200-4.200zM-5.500-1.300h11.200a5.600 5.600 0 0 0-11.200 0z" fill="url(#iee)" fill-rule="evenodd"/><path d="M-18 0A18 8.800 0 0 1 18 0" transform="rotate(-40)" fill="none" stroke="#f4cc28" stroke-width="2.600" stroke-linecap="round"/></g><g><path d="M135.500 871h12l2 2.500h17.500v20h-31.500z" fill="url(#fold)" stroke="#d8b45a" stroke-width=".8"/><rect x="139" y="868.500" width="12" height="5" fill="#fdf6dc" stroke="#d8b45a" stroke-width=".5"/><rect x="139.800" y="869" width="3" height="2" fill="#2aa83a"/><rect x="146" y="870.500" width="12" height="5" fill="#fdf6dc" stroke="#d8b45a" stroke-width=".5"/><rect x="146.800" y="871" width="3" height="2" fill="#d8402a"/><rect x="153" y="872.500" width="12" height="5" fill="#fdf6dc" stroke="#d8b45a" stroke-width=".5"/><rect x="153.800" y="873" width="3" height="2" fill="#2a8ad8"/><path d="M135.500 877h31.500v16.500h-31.500z" fill="url(#fold)" stroke="#d8b45a" stroke-width=".6"/><path d="M140 895v-9.500l2-2h19l2 2V895h-5v-6h-13v6z" fill="#a8d4f4" stroke="#6aa6d8" stroke-width=".8" opacity=".95"/><path d="M141 887h21" stroke="#e6f4ff" stroke-width="1.600"/></g><g><rect x="203" y="869.500" width="21.500" height="22" fill="#8fb8e8" opacity=".7"/><rect x="201" y="869.500" width="21.500" height="22" fill="#9cc4ee" opacity=".8"/><rect x="199" y="869.500" width="21.500" height="22.500" fill="#a8cdf2" stroke="#86aee0" stroke-width=".6"/><circle cx="209.700" cy="880.700" r="8.600" fill="#f07a1c"/><circle cx="209.700" cy="880.700" r="7" fill="#f59a3a"/><path d="M206.800 875.800l8 4.900-8 4.900z" fill="#fff"/></g><g transform="translate(275,880)"><circle r="14.300" fill="#fbd02e"/><path d="M0 0L-12.380 -7.150A14.300 14.300 0 0 1 12.380 -7.150z" fill="#dd3a2a"/><path d="M0 0L12.380 -7.150A14.300 14.300 0 0 1 12.380 -7.150L0 0z" fill="#dd3a2a"/><path d="M-12.380 -7.150A14.300 14.300 0 0 0 0 14.300L6.200 3.600L0 0z" fill="#4cae4a"/><path d="M-12.380 -7.150L-6.200 3.600L0 7.150L0 14.300A14.300 14.300 0 0 1 -12.380 -7.150z" fill="#4cae4a"/><path d="M-12.380-7.150A14.300 14.300 0 0 1 12.380-7.150H0z" fill="#dd3a2a"/><circle r="6.900" fill="#f4f6f8"/><circle r="5.300" fill="#3f86d8"/></g><linearGradient id="abtn" x1="0" y1="0" x2="0" y2="1"><stop offset="0" stop-color="#dfe3ee"/><stop offset=".45" stop-color="#a3b0d2"/><stop offset=".6" stop-color="#8b9ccb"/><stop offset="1" stop-color="#c3cbe3"/></linearGradient><rect x="308.500" y="861.500" width="57" height="40" rx="3" fill="url(#abtn)" stroke="#eef2fc" stroke-width="1.2"/><path d="M309 890q20-22 56-26v-2h-56z" fill="#fff" opacity=".18"/></svg>
<svg width="33" height="33" viewBox="0 0 33 33" style="left:320px;top:864px;"><circle cx="16" cy="14.1" r="12.3" fill="#0f8f8c" stroke="#000" stroke-width="1.5"/><path d="M10.4 8.2q2.500-2.400 5.800-2.400t5.800 2.400h-2.200v21.300h-6.800V8.200z" fill="#000"/><rect x="13" y="7.600" width="6.800" height="22" fill="#7a2410"/><rect x="13.900" y="7.600" width="5" height="22" fill="#d8902c"/><rect x="15.300" y="7.600" width="2.200" height="22" fill="#fbe85a"/><rect x="11.100" y="29.500" width="6.100" height="2.800" fill="#000"/><rect x="17.200" y="29.500" width="4.800" height="2.800" fill="#8c1010"/><path d="M1.100 26.900L6.900 20.600L10.400 16.400L11.800 18.800L13 18.100V22L10.400 23.200L9.300 25.300L8.100 23.400L1.800 27.400z" fill="#f6f212" stroke="#000" stroke-width=".7" stroke-linejoin="round"/><path d="M32.600 3.400L26.500 9L24.700 10.400L23.300 8L21.900 9.900L20 13.200L21.900 14.100L22.300 16.200H23.700L25.600 12.700L27 10.800L32.200 4.400z" fill="#f6f212" stroke="#000" stroke-width=".7" stroke-linejoin="round"/></svg>
<div class="a" style="left:1340px;top:871px;font-size:12px;line-height:14px;color:#e8eefc;">PL</div>
<svg id="tray" width="260" height="40" viewBox="1340 860 260 40" style="left:1340px;top:860px;"><rect x="1362.500" y="877.500" width="13" height="6.500" rx="1" fill="#d8d8d0" stroke="#8a8a88" stroke-width=".8"/><path d="M1364 879.500h10M1364 881.500h10" stroke="#8a8a88" stroke-width=".8" stroke-dasharray="1.500 1"/><path d="M1365 877c1-4 4-2 6-4.500" stroke="#c8c8c8" stroke-width=".8" fill="none"/><path d="M1389.500 883.500l4-4.500 4 4.500z" fill="#f0f4ff"/><path d="M1411.500 873.500v14" stroke="#f4f4f4" stroke-width="1.400"/><path d="M1412.500 874.500c3-1.500 5 1 8 0 1.500-.5 3 .5 4.500-.2l-1.500 5c-2 1-3.500-.3-5 .2-2.500.8-4-.5-6 .3z" fill="#e8ecf4" stroke="#fff" stroke-width=".6"/><rect x="1438.500" y="875.500" width="8" height="11.500" rx="1.500" fill="none" stroke="#f4f4f4" stroke-width="1.400"/><rect x="1440.500" y="873.800" width="4" height="1.800" fill="#f4f4f4"/><rect x="1440.300" y="882.300" width="4.500" height="3.300" fill="#f4f4f4"/><path d="M1458 886.500h2v-2h-2zM1461.500 886.500h2v-4.500h-2zM1465 886.500h2v-7h-2zM1468.500 886.500h2v-9.500h-2zM1472 886.500h2v-12h-2z" fill="#d8dce8" opacity=".85"/><circle cx="1469" cy="883" r="3.300" fill="#f5a81c"/><path d="M1469 877.500v11M1463.500 883h11M1465 879l8 8M1473 879l-8 8" stroke="#f5a81c" stroke-width="1.200"/><path d="M1482.500 878.500h3l4-4v13l-4-4h-3z" fill="#f0f0f0"/><path d="M1491.500 878.500q1.800 2.500 0 5M1493.500 876.500q3 4.500 0 9" stroke="#f0f0f0" stroke-width="1" fill="none"/><rect x="1586.500" y="861.500" width="13" height="38" fill="#4a6cb4" fill-opacity=".3" stroke="#8aa6dc" stroke-opacity=".7" stroke-width=".8"/></svg>
<div class="a" style="left:1514px;top:866px;width:62px;text-align:center;font-size:12px;line-height:14px;color:#b4c2e0;">23:05</div>
<div class="a" style="left:1507.5px;top:882.5px;width:74px;text-align:center;font-size:11.6px;line-height:14px;color:#f4f8ff;">2015-03-13</div>
</body></html>
